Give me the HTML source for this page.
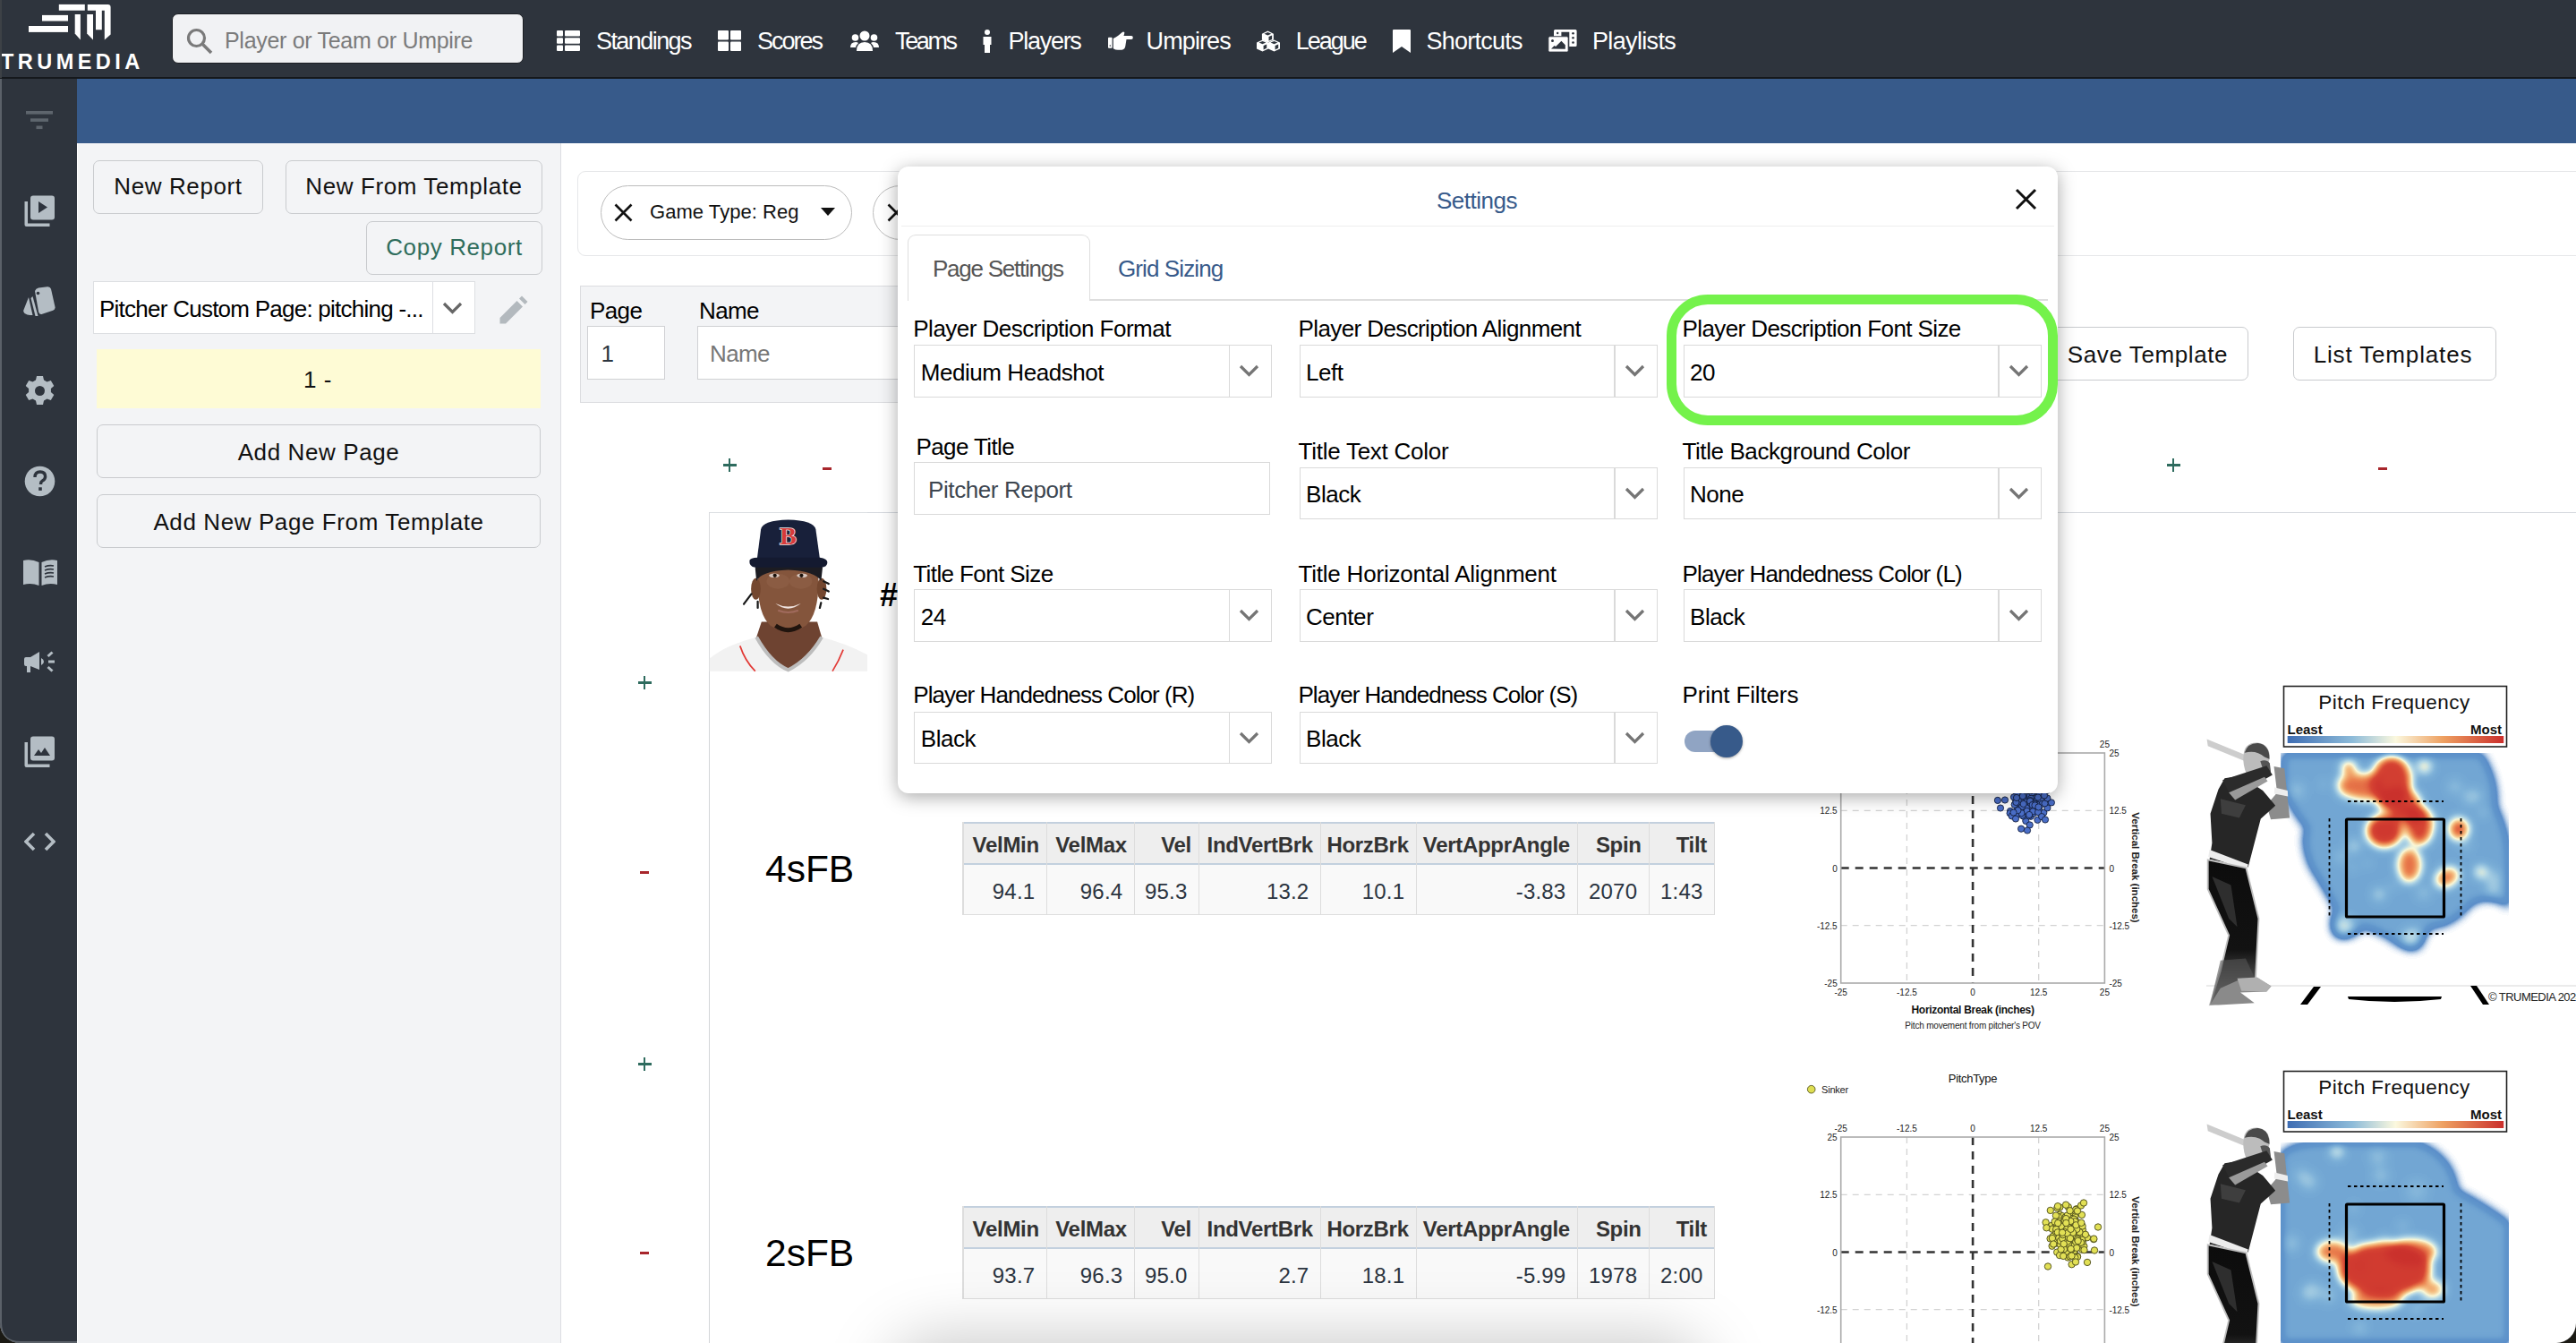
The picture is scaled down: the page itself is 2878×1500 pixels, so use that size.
<!DOCTYPE html>
<html><head><meta charset="utf-8">
<style>
*{box-sizing:border-box;margin:0;padding:0}
html,body{width:2878px;height:1500px;overflow:hidden;background:#1b1a14}
body{font-family:"Liberation Sans",sans-serif;position:relative;color:#000}
.a{position:absolute}
.t{position:absolute;white-space:nowrap;line-height:1}
#win{position:absolute;left:0;top:0;width:2878px;height:1500px;overflow:hidden;border-radius:0 0 22px 22px;background:#fff}
#hdr{left:0;top:0;width:2878px;height:88px;background:#2e343d;border-bottom:2px solid #15181c}
#side{left:0;top:88px;width:86px;height:1412px;background:#2e343d}
#blue{left:86px;top:88px;width:2792px;height:72px;background:#375a8a}
#lpanel{left:86px;top:160px;width:541px;height:1340px;background:#f3f4f6;border-left:1px solid #fff;border-right:1px solid #dcdee2}
.nav{color:#fff;font-size:27px;top:33px}
.btn{position:absolute;background:#f3f4f6;border:1.5px solid #c9cbce;border-radius:7px;font-size:26px;color:#111;text-align:center;white-space:nowrap;letter-spacing:0.6px}
.ico{position:absolute}
.lbl{font-size:26px;color:#000;letter-spacing:-0.6px}
.val{font-size:26px;color:#000;letter-spacing:-0.45px}
.pl{width:15px;height:15px}
.pl:before{content:"";position:absolute;left:0;top:6.4px;width:14.5px;height:2.3px;background:#2e6b5e}
.pl:after{content:"";position:absolute;left:6.1px;top:0;width:2.3px;height:14.5px;background:#2e6b5e}
.mi{width:9.5px;height:2.6px;background:#a8262c}
.th{font-size:24px;font-weight:bold;color:#333;letter-spacing:-0.3px}
.td{font-size:24px;color:#2b3440;letter-spacing:0.2px}
.big{font-size:42.5px;color:#000;letter-spacing:0px;margin-top:-1.5px}
</style></head>
<body>
<div id="win">
<div id="hdr" class="a"></div>
<!-- logo -->
<svg class="a" style="left:0;top:0" width="170" height="86" viewBox="0 0 170 86">
  <g fill="#fff">
    <rect x="65.8" y="4.9" width="29" height="6.8"/>
    <rect x="47" y="16.9" width="29" height="6.6"/>
    <rect x="32" y="29" width="44" height="6.9"/>
    <path d="M83.7 16 H89.9 V44.4 L83.7 37.6 Z"/>
    <path d="M97.2 16 H104 V44.4 L97.2 37.6 Z"/>
    <path d="M97.8 4.9 H120.6 Q123.6 4.9 123.6 7.9 V38.4 L116.8 44.6 V11.7 H113.8 V33.3 H107 V11.7 H97.8 Z"/>
  </g>
  <text x="1" y="77" fill="#fff" font-family="Liberation Sans" font-weight="bold" font-size="23.5" letter-spacing="4.45">TRUMEDIA</text>
</svg>
<!-- search -->
<div class="a" style="left:192px;top:15px;width:393px;height:56px;background:#f1f2f4;border-radius:7px;border:1px solid #1c1f24"></div>
<svg class="a" style="left:208px;top:31px" width="30" height="30" viewBox="0 0 30 30"><circle cx="11.5" cy="11.5" r="9" fill="none" stroke="#7a7a7a" stroke-width="3.2"/><path d="M18 18 L28 28" stroke="#7a7a7a" stroke-width="3.6"/></svg>
<div class="t" style="left:251px;top:33px;font-size:25px;color:#7b7b7b;letter-spacing:-0.3px">Player or Team or Umpire</div>

<!-- nav -->
<svg class="a" style="left:622px;top:34px" width="26" height="23" viewBox="0 0 26 23"><g fill="#fff"><rect x="0" y="0" width="7" height="6.5" rx="1"/><rect x="9" y="0" width="17" height="6.5" rx="1"/><rect x="0" y="8.3" width="7" height="6.5" rx="1"/><rect x="9" y="8.3" width="17" height="6.5" rx="1"/><rect x="0" y="16.5" width="7" height="6.5" rx="1"/><rect x="9" y="16.5" width="17" height="6.5" rx="1"/></g></svg>
<div class="t nav" style="left:666px;letter-spacing:-1.57px">Standings</div>
<svg class="a" style="left:802px;top:34px" width="26" height="23" viewBox="0 0 26 23"><g fill="#fff"><rect x="0" y="0" width="12" height="10.5" rx="1"/><rect x="14" y="0" width="12" height="10.5" rx="1"/><rect x="0" y="12.5" width="12" height="10.5" rx="1"/><rect x="14" y="12.5" width="12" height="10.5" rx="1"/></g></svg>
<div class="t nav" style="left:846px;letter-spacing:-2.0px">Scores</div>
<svg class="a" style="left:950px;top:34px" width="32" height="24" viewBox="0 0 32 24"><g fill="#fff"><circle cx="16" cy="6" r="5.5"/><circle cx="5.5" cy="8" r="3.8"/><circle cx="26.5" cy="8" r="3.8"/><path d="M7 23 q0 -10 9 -10 q9 0 9 10z"/><path d="M0 19 q0 -6 6 -6 q2 0 3 1 q-3 3 -3 5z"/><path d="M32 19 q0 -6 -6 -6 q-2 0 -3 1 q3 3 3 5z"/></g></svg>
<div class="t nav" style="left:1000px;letter-spacing:-2.35px">Teams</div>
<svg class="a" style="left:1098px;top:33px" width="10" height="26" viewBox="0 0 10 26"><g fill="#fff"><circle cx="5" cy="3" r="3"/><path d="M0.5 8 h9 v9 h-1.5 v9 h-6 v-9 h-1.5z"/></g></svg>
<div class="t nav" style="left:1126.5px;letter-spacing:-1.28px">Players</div>
<svg class="a" style="left:1230px;top:25px" width="40" height="40" viewBox="0 0 40 40"><g fill="#fff"><rect x="8" y="16.7" width="4.6" height="12" rx="0.8"/><path d="M13.8 18 q3 -1.5 5.5 -3.3 l4.5 -3.8 q1.8 -0.8 2.6 0.6 l-0.9 3.6 h8.5 q1.8 0 1.8 2 q0 2 -1.8 2 h-5.5 l-1.2 7.5 q-0.6 3.8 -4 4.2 h-4.5 q-2.5 0 -5 -1.5 z"/></g><circle cx="10.3" cy="26" r="0.8" fill="#2e343d"/></svg>
<div class="t nav" style="left:1280.6px;letter-spacing:-0.9px">Umpires</div>
<svg class="a" style="left:1398px;top:25px" width="40" height="40" viewBox="0 0 40 40"><g transform="translate(11.9 9.5)"><path d="M0 3.2 L6.5 0 L13 3.2 V10 L6.5 13 L0 10z" fill="#fff"/><path d="M2.6 3.2 L6.5 1.6 L10.4 3.2 L6.5 4.9z" fill="#2e343d"/><path d="M7.6 6.6 L11.2 5.1 V9.4 L7.6 11z" fill="#2e343d"/></g><g transform="translate(6 19.4)"><path d="M0 3.2 L6.5 0 L13 3.2 V10 L6.5 13 L0 10z" fill="#fff"/><path d="M2.6 3.2 L6.5 1.6 L10.4 3.2 L6.5 4.9z" fill="#2e343d"/><path d="M7.6 6.6 L11.2 5.1 V9.4 L7.6 11z" fill="#2e343d"/></g><g transform="translate(19 19.4)"><path d="M0 3.2 L6.5 0 L13 3.2 V10 L6.5 13 L0 10z" fill="#fff"/><path d="M2.6 3.2 L6.5 1.6 L10.4 3.2 L6.5 4.9z" fill="#2e343d"/><path d="M7.6 6.6 L11.2 5.1 V9.4 L7.6 11z" fill="#2e343d"/></g></svg>
<div class="t nav" style="left:1447.7px;letter-spacing:-2px">League</div>
<svg class="a" style="left:1556px;top:33px" width="20" height="26" viewBox="0 0 20 26"><path fill="#fff" d="M1 0 h18 q1 0 1 1 v25 l-10 -7 l-10 7 v-25 q0 -1 1 -1z"/></svg>
<div class="t nav" style="left:1593.6px;letter-spacing:-0.76px">Shortcuts</div>
<svg class="a" style="left:1725px;top:25px" width="40" height="40" viewBox="0 0 40 40"><path fill="#fff" fill-rule="evenodd" d="M12.5 7.9 h22.6 q1.5 0 1.5 1.5 v16.2 q0 1.5 -1.5 1.5 h-6.8 v-16.3 h-8.9 v4.6 h-8.4 v-6 q0 -1.5 1.5 -1.5z"/><g fill="#2e343d"><circle cx="32.5" cy="12.2" r="1.3"/><circle cx="32.5" cy="17.3" r="1.3"/><circle cx="32.5" cy="22.5" r="1.3"/><circle cx="15.2" cy="12" r="1.2"/></g><rect x="4.9" y="15.8" width="22.2" height="17.2" rx="1.6" fill="#fff" stroke="#2e343d" stroke-width="0.8"/><g fill="#2e343d"><circle cx="9.5" cy="20.5" r="1.5"/><path d="M8 29.6 L11.6 25.9 L13.1 27.1 L19.4 20.8 L23.8 25.3 V29.8z"/></g></svg>
<div class="t nav" style="left:1779px;letter-spacing:-0.66px">Playlists</div>

<div id="side" class="a"></div>
<svg class="a" style="left:0;top:0;z-index:5" width="90" height="1500" viewBox="0 0 90 1500"><path d="M1 88 V1477 Q1 1499 23 1499 H86" fill="none" stroke="#5b6169" stroke-width="2"/><path d="M1 0 V87" stroke="#3d4146" stroke-width="2"/></svg>
<div id="blue" class="a"></div>
<div id="lpanel" class="a"></div>

<!-- sidebar icons -->
<svg class="a" style="left:29px;top:124px" width="31" height="21" viewBox="0 0 31 21"><g fill="#5e656d"><rect x="0" y="0" width="30" height="3.6"/><rect x="5" y="8.3" width="20" height="3.6"/><rect x="11.5" y="16.5" width="7" height="3.6"/></g></svg>
<svg class="a" style="left:27px;top:218px" width="35" height="35" viewBox="0 0 35 35"><g fill="#b4bdc4"><path d="M0.5 7 h3.5 v24.5 h24.5 v3.5 h-26 q-2 0 -2 -2z"/><rect x="7" y="0.5" width="27" height="27" rx="3"/></g><path d="M16 7 v13 l10 -6.5z" fill="#2e343d"/></svg>
<svg class="a" style="left:26px;top:320px" width="36" height="34" viewBox="0 0 36 34"><g fill="#b4bdc4"><path d="M13 5 q1 -3 4 -3.5 l10 -1.3 q3 -0.3 4 2.5 l4.5 20 q0.5 3 -2.3 4 l-12 4 q-3 0.8 -4 -2z"/><path d="M6 12 l4.5 20 l-3 0 q-3 0 -6 -2 q-2 -2 -1 -4z"/><path d="M10.5 11 l6 22 l-3 0 l-5 -20z"/></g><circle cx="16.5" cy="7.5" r="1.8" fill="#2e343d"/></svg>
<svg class="a" style="left:27px;top:419px" width="35" height="35" viewBox="-17.5 -17.5 35 35"><g fill="#b4bdc4"><path d="M-3.5 -16.5 h7 l1 4.5 l3.5 2 l4.3 -1.5 l3.5 6 l-3.4 3 v4 l3.4 3 l-3.5 6 l-4.3 -1.5 l-3.5 2 l-1 4.5 h-7 l-1 -4.5 l-3.5 -2 l-4.3 1.5 l-3.5 -6 l3.4 -3 v-4 l-3.4 -3 l3.5 -6 l4.3 1.5 l3.5 -2z"/></g><circle cx="0" cy="0" r="5.5" fill="#2e343d"/></svg>
<svg class="a" style="left:27px;top:520px" width="35" height="35" viewBox="0 0 35 35"><circle cx="17.5" cy="17.5" r="16.8" fill="#b4bdc4"/><path d="M12 13 q0 -6 5.8 -6 q5.8 0 5.8 5.3 q0 3.3 -3.5 5 q-1.5 0.8 -1.5 2.8 v1" fill="none" stroke="#2e343d" stroke-width="3.4"/><rect x="16.2" y="24.3" width="3.6" height="3.6" fill="#2e343d"/></svg>
<svg class="a" style="left:26px;top:625px" width="38" height="30" viewBox="0 0 38 30"><g fill="#b4bdc4"><path d="M0 1 q9 -2 17.5 2 v26 q-8.5 -3.5 -17.5 -1z"/><path d="M20.5 3 q8.5 -4 17.5 -2 v27 q-9 -2.5 -17.5 1z"/></g><g stroke="#2e343d" stroke-width="1.6" fill="none"><path d="M24 8 q5 -2 10 -1"/><path d="M24 12 q5 -2 10 -1"/><path d="M24 16 q5 -2 10 -1"/><path d="M24 20 q5 -2 10 -1"/></g></svg>
<svg class="a" style="left:27px;top:726px" width="35" height="26" viewBox="0 0 35 26"><g fill="#b4bdc4"><path d="M2 8 h5 l10 -6 v20 l-10 -4 v7 h-4 v-7 h-1 q-2 0 -2 -2 v-6 q0 -2 2 -2z"/><path d="M19 9 q3 1.5 3 4 q0 2.5 -3 4z"/><rect x="27" y="11.5" width="7" height="3" /><path d="M25.5 6 l5 -4.5 l2 2 l-5 4.5z"/><path d="M25.5 20 l5 4.5 l2 -2 l-5 -4.5z"/></g></svg>
<svg class="a" style="left:27px;top:822px" width="35" height="35" viewBox="0 0 35 35"><g fill="#b4bdc4"><path d="M0.5 7 h3.5 v24.5 h24.5 v3.5 h-26 q-2 0 -2 -2z"/><rect x="7" y="0.5" width="27" height="27" rx="3"/></g><path d="M11 22 l5 -7 l3 4 l4 -6 l6 9z" fill="#2e343d"/></svg>
<svg class="a" style="left:27px;top:929px" width="35" height="22" viewBox="0 0 35 22"><g fill="none" stroke="#b4bdc4" stroke-width="3.6"><path d="M11 2 l-9 9 l9 9"/><path d="M24 2 l9 9 l-9 9"/></g></svg>
<div class="a" style="left:86px;top:160px;width:1px;height:1340px;background:#fff"></div>


<!-- main content -->
<div class="a" style="left:645px;top:191px;width:2300px;height:95px;border:1.5px solid #e6e7e9;border-radius:9px;background:#fff"></div>
<div class="a" style="left:671px;top:206.5px;width:281px;height:61px;border:1.5px solid #bcbcbc;border-radius:31px;background:#fff"></div>
<svg class="a" style="left:686px;top:227px" width="21" height="21" viewBox="0 0 21 21"><path d="M1.5 1.5 L19.5 19.5 M19.5 1.5 L1.5 19.5" stroke="#111" stroke-width="2.6"/></svg>
<div class="t" style="left:726px;top:226px;font-size:22px;color:#111;letter-spacing:0.05px">Game Type: Reg</div>
<svg class="a" style="left:917px;top:232px" width="16" height="10" viewBox="0 0 16 10"><path d="M0 0 h16 l-8 9z" fill="#111"/></svg>
<div class="a" style="left:975px;top:206.5px;width:200px;height:61px;border:1.5px solid #bcbcbc;border-radius:31px;background:#fff"></div>
<svg class="a" style="left:991px;top:227px" width="21" height="21" viewBox="0 0 21 21"><path d="M1.5 1.5 L19.5 19.5 M19.5 1.5 L1.5 19.5" stroke="#111" stroke-width="2.6"/></svg>

<div class="a" style="left:648px;top:319px;width:1620px;height:131px;background:#f3f4f6;border:1.5px solid #dcdde0"></div>
<div class="t" style="left:659px;top:333.5px;font-size:26px;color:#000;letter-spacing:-0.6px">Page</div>
<div class="a" style="left:656px;top:364px;width:87px;height:60px;background:#fff;border:1.5px solid #d0d1d4"></div>
<div class="t" style="left:671.5px;top:381.5px;font-size:26px;color:#2d3640">1</div>
<div class="t" style="left:781px;top:334px;font-size:26px;color:#000;letter-spacing:-0.6px">Name</div>
<div class="a" style="left:779px;top:364px;width:1200px;height:60px;background:#fff;border:1.5px solid #d0d1d4"></div>
<div class="t" style="left:793px;top:382px;font-size:26px;color:#777;letter-spacing:-0.6px">Name</div>

<div class="btn" style="left:2287px;top:365px;width:225px;height:60px;line-height:61px;background:#fff">Save Template</div>
<div class="btn" style="left:2562px;top:365px;width:227px;height:60px;line-height:61px;background:#fff;letter-spacing:0.85px;text-indent:-4px">List Templates</div>

<div class="a pl" style="left:808px;top:512px"></div>
<div class="a mi" style="left:919px;top:522px"></div>
<div class="a pl" style="left:2421px;top:512px"></div>
<div class="a mi" style="left:2657px;top:522px"></div>
<div class="a pl" style="left:713px;top:755px"></div>
<div class="a mi" style="left:715px;top:973px"></div>
<div class="a pl" style="left:713px;top:1181px"></div>
<div class="a mi" style="left:715px;top:1398px"></div>

<div class="a" style="left:792px;top:572px;width:2200px;height:1000px;border-top:1.5px solid #d5d9de;border-left:1.5px solid #d3d5d8"></div>
<div class="t" style="left:982.5px;top:647px;font-size:36px;font-style:italic;font-weight:bold;color:#000">#</div>
<div class="t big" style="left:855px;top:951px">4sFB</div>
<div class="t big" style="left:855px;top:1380px">2sFB</div>
<div class="a" style="left:1076px;top:918px;width:839.5px;height:48px;background:#eeeeee;border-top:2px solid #c3d0de;border-bottom:2px solid #c3d0de"></div>
<div class="a" style="left:1076px;top:966px;width:839.5px;height:56px;background:#f9f9f9;border-bottom:1.5px solid #dedede"></div>
<div class="a" style="left:1075.2px;top:918px;width:1.5px;height:104px;background:#dddddd"></div>
<div class="a" style="left:1168.5px;top:918px;width:1.5px;height:104px;background:#dddddd"></div>
<div class="a" style="left:1266.5px;top:918px;width:1.5px;height:104px;background:#dddddd"></div>
<div class="a" style="left:1338.8px;top:918px;width:1.5px;height:104px;background:#dddddd"></div>
<div class="a" style="left:1474.7px;top:918px;width:1.5px;height:104px;background:#dddddd"></div>
<div class="a" style="left:1581.5px;top:918px;width:1.5px;height:104px;background:#dddddd"></div>
<div class="a" style="left:1761.7px;top:918px;width:1.5px;height:104px;background:#dddddd"></div>
<div class="a" style="left:1841.5px;top:918px;width:1.5px;height:104px;background:#dddddd"></div>
<div class="a" style="left:1914.8px;top:918px;width:1.5px;height:104px;background:#dddddd"></div>
<div class="t th" style="right:1717.2px;top:932px">VelMin</div>
<div class="t td" style="right:1721.7px;top:984px">94.1</div>
<div class="t th" style="right:1619.2px;top:932px">VelMax</div>
<div class="t td" style="right:1623.7px;top:984px">96.4</div>
<div class="t th" style="right:1547.0px;top:932px">Vel</div>
<div class="t td" style="right:1551.5px;top:984px">95.3</div>
<div class="t th" style="right:1411.1px;top:932px">IndVertBrk</div>
<div class="t td" style="right:1415.6px;top:984px">13.2</div>
<div class="t th" style="right:1304.3px;top:932px">HorzBrk</div>
<div class="t td" style="right:1308.8px;top:984px">10.1</div>
<div class="t th" style="right:1124.1px;top:932px">VertApprAngle</div>
<div class="t td" style="right:1128.6px;top:984px">-3.83</div>
<div class="t th" style="right:1044.3px;top:932px">Spin</div>
<div class="t td" style="right:1048.8px;top:984px">2070</div>
<div class="t th" style="right:971.0px;top:932px">Tilt</div>
<div class="t td" style="right:975.5px;top:984px">1:43</div>
<div class="a" style="left:1076px;top:1347px;width:839.5px;height:48px;background:#eeeeee;border-top:2px solid #c3d0de;border-bottom:2px solid #c3d0de"></div>
<div class="a" style="left:1076px;top:1395px;width:839.5px;height:56px;background:#f9f9f9;border-bottom:1.5px solid #dedede"></div>
<div class="a" style="left:1075.2px;top:1347px;width:1.5px;height:104px;background:#dddddd"></div>
<div class="a" style="left:1168.5px;top:1347px;width:1.5px;height:104px;background:#dddddd"></div>
<div class="a" style="left:1266.5px;top:1347px;width:1.5px;height:104px;background:#dddddd"></div>
<div class="a" style="left:1338.8px;top:1347px;width:1.5px;height:104px;background:#dddddd"></div>
<div class="a" style="left:1474.7px;top:1347px;width:1.5px;height:104px;background:#dddddd"></div>
<div class="a" style="left:1581.5px;top:1347px;width:1.5px;height:104px;background:#dddddd"></div>
<div class="a" style="left:1761.7px;top:1347px;width:1.5px;height:104px;background:#dddddd"></div>
<div class="a" style="left:1841.5px;top:1347px;width:1.5px;height:104px;background:#dddddd"></div>
<div class="a" style="left:1914.8px;top:1347px;width:1.5px;height:104px;background:#dddddd"></div>
<div class="t th" style="right:1717.2px;top:1361px">VelMin</div>
<div class="t td" style="right:1721.7px;top:1413px">93.7</div>
<div class="t th" style="right:1619.2px;top:1361px">VelMax</div>
<div class="t td" style="right:1623.7px;top:1413px">96.3</div>
<div class="t th" style="right:1547.0px;top:1361px">Vel</div>
<div class="t td" style="right:1551.5px;top:1413px">95.0</div>
<div class="t th" style="right:1411.1px;top:1361px">IndVertBrk</div>
<div class="t td" style="right:1415.6px;top:1413px">2.7</div>
<div class="t th" style="right:1304.3px;top:1361px">HorzBrk</div>
<div class="t td" style="right:1308.8px;top:1413px">18.1</div>
<div class="t th" style="right:1124.1px;top:1361px">VertApprAngle</div>
<div class="t td" style="right:1128.6px;top:1413px">-5.99</div>
<div class="t th" style="right:1044.3px;top:1361px">Spin</div>
<div class="t td" style="right:1048.8px;top:1413px">1978</div>
<div class="t th" style="right:971.0px;top:1361px">Tilt</div>
<div class="t td" style="right:975.5px;top:1413px">2:00</div>
<svg class="a" style="left:1990px;top:750.5px" width="420" height="400" viewBox="1990 750.5 420 400">
<line x1="2130.4" y1="840.5" x2="2130.4" y2="1097.5" stroke="#d3d3d3" stroke-width="1.3" stroke-dasharray="7,6"/>
<line x1="2277.7" y1="840.5" x2="2277.7" y2="1097.5" stroke="#d3d3d3" stroke-width="1.3" stroke-dasharray="7,6"/>
<line x1="2056.7" y1="1033.2" x2="2351.4" y2="1033.2" stroke="#d3d3d3" stroke-width="1.3" stroke-dasharray="7,6"/>
<line x1="2056.7" y1="904.8" x2="2351.4" y2="904.8" stroke="#d3d3d3" stroke-width="1.3" stroke-dasharray="7,6"/>
<line x1="2204.1" y1="840.5" x2="2204.1" y2="1097.5" stroke="#333" stroke-width="2.6" stroke-dasharray="9,7"/>
<line x1="2056.7" y1="969.0" x2="2351.4" y2="969.0" stroke="#333" stroke-width="2.6" stroke-dasharray="9,7"/>
<rect x="2056.7" y="840.5" width="294.7" height="257" fill="none" stroke="#aaa" stroke-width="1.6"/>
<circle cx="2268.9" cy="911.3" r="3.6" fill="#4a6ec8" stroke="#14203f" stroke-width="0.9"/>
<circle cx="2258.7" cy="907.9" r="3.6" fill="#4a6ec8" stroke="#14203f" stroke-width="0.9"/>
<circle cx="2265.4" cy="891.6" r="3.6" fill="#4a6ec8" stroke="#14203f" stroke-width="0.9"/>
<circle cx="2287.0" cy="897.0" r="3.6" fill="#4a6ec8" stroke="#14203f" stroke-width="0.9"/>
<circle cx="2267.6" cy="904.5" r="3.6" fill="#4a6ec8" stroke="#14203f" stroke-width="0.9"/>
<circle cx="2279.3" cy="894.6" r="3.6" fill="#4a6ec8" stroke="#14203f" stroke-width="0.9"/>
<circle cx="2273.9" cy="882.3" r="3.6" fill="#4a6ec8" stroke="#14203f" stroke-width="0.9"/>
<circle cx="2264.3" cy="889.3" r="3.6" fill="#4a6ec8" stroke="#14203f" stroke-width="0.9"/>
<circle cx="2254.7" cy="875.4" r="3.6" fill="#4a6ec8" stroke="#14203f" stroke-width="0.9"/>
<circle cx="2251.7" cy="891.9" r="3.6" fill="#4a6ec8" stroke="#14203f" stroke-width="0.9"/>
<circle cx="2266.3" cy="890.8" r="3.6" fill="#4a6ec8" stroke="#14203f" stroke-width="0.9"/>
<circle cx="2268.7" cy="877.6" r="3.6" fill="#4a6ec8" stroke="#14203f" stroke-width="0.9"/>
<circle cx="2267.2" cy="898.1" r="3.6" fill="#4a6ec8" stroke="#14203f" stroke-width="0.9"/>
<circle cx="2275.5" cy="884.0" r="3.6" fill="#4a6ec8" stroke="#14203f" stroke-width="0.9"/>
<circle cx="2264.0" cy="868.8" r="3.6" fill="#4a6ec8" stroke="#14203f" stroke-width="0.9"/>
<circle cx="2263.0" cy="866.4" r="3.6" fill="#4a6ec8" stroke="#14203f" stroke-width="0.9"/>
<circle cx="2253.8" cy="909.3" r="3.6" fill="#4a6ec8" stroke="#14203f" stroke-width="0.9"/>
<circle cx="2246.0" cy="905.4" r="3.6" fill="#4a6ec8" stroke="#14203f" stroke-width="0.9"/>
<circle cx="2271.3" cy="890.9" r="3.6" fill="#4a6ec8" stroke="#14203f" stroke-width="0.9"/>
<circle cx="2272.6" cy="901.9" r="3.6" fill="#4a6ec8" stroke="#14203f" stroke-width="0.9"/>
<circle cx="2278.5" cy="892.0" r="3.6" fill="#4a6ec8" stroke="#14203f" stroke-width="0.9"/>
<circle cx="2262.1" cy="887.1" r="3.6" fill="#4a6ec8" stroke="#14203f" stroke-width="0.9"/>
<circle cx="2258.1" cy="894.4" r="3.6" fill="#4a6ec8" stroke="#14203f" stroke-width="0.9"/>
<circle cx="2260.1" cy="908.9" r="3.6" fill="#4a6ec8" stroke="#14203f" stroke-width="0.9"/>
<circle cx="2249.3" cy="880.8" r="3.6" fill="#4a6ec8" stroke="#14203f" stroke-width="0.9"/>
<circle cx="2258.5" cy="867.8" r="3.6" fill="#4a6ec8" stroke="#14203f" stroke-width="0.9"/>
<circle cx="2287.0" cy="863.7" r="3.6" fill="#4a6ec8" stroke="#14203f" stroke-width="0.9"/>
<circle cx="2265.2" cy="888.2" r="3.6" fill="#4a6ec8" stroke="#14203f" stroke-width="0.9"/>
<circle cx="2284.6" cy="869.2" r="3.6" fill="#4a6ec8" stroke="#14203f" stroke-width="0.9"/>
<circle cx="2278.7" cy="885.5" r="3.6" fill="#4a6ec8" stroke="#14203f" stroke-width="0.9"/>
<circle cx="2266.4" cy="886.3" r="3.6" fill="#4a6ec8" stroke="#14203f" stroke-width="0.9"/>
<circle cx="2274.4" cy="880.2" r="3.6" fill="#4a6ec8" stroke="#14203f" stroke-width="0.9"/>
<circle cx="2267.2" cy="899.6" r="3.6" fill="#4a6ec8" stroke="#14203f" stroke-width="0.9"/>
<circle cx="2286.4" cy="863.7" r="3.6" fill="#4a6ec8" stroke="#14203f" stroke-width="0.9"/>
<circle cx="2283.3" cy="907.3" r="3.6" fill="#4a6ec8" stroke="#14203f" stroke-width="0.9"/>
<circle cx="2263.2" cy="899.0" r="3.6" fill="#4a6ec8" stroke="#14203f" stroke-width="0.9"/>
<circle cx="2263.3" cy="916.4" r="3.6" fill="#4a6ec8" stroke="#14203f" stroke-width="0.9"/>
<circle cx="2270.1" cy="892.2" r="3.6" fill="#4a6ec8" stroke="#14203f" stroke-width="0.9"/>
<circle cx="2265.7" cy="892.4" r="3.6" fill="#4a6ec8" stroke="#14203f" stroke-width="0.9"/>
<circle cx="2266.2" cy="883.6" r="3.6" fill="#4a6ec8" stroke="#14203f" stroke-width="0.9"/>
<circle cx="2288.6" cy="870.2" r="3.6" fill="#4a6ec8" stroke="#14203f" stroke-width="0.9"/>
<circle cx="2231.9" cy="893.4" r="3.6" fill="#4a6ec8" stroke="#14203f" stroke-width="0.9"/>
<circle cx="2266.5" cy="899.8" r="3.6" fill="#4a6ec8" stroke="#14203f" stroke-width="0.9"/>
<circle cx="2266.0" cy="893.1" r="3.6" fill="#4a6ec8" stroke="#14203f" stroke-width="0.9"/>
<circle cx="2271.3" cy="907.6" r="3.6" fill="#4a6ec8" stroke="#14203f" stroke-width="0.9"/>
<circle cx="2263.5" cy="890.2" r="3.6" fill="#4a6ec8" stroke="#14203f" stroke-width="0.9"/>
<circle cx="2287.4" cy="901.9" r="3.6" fill="#4a6ec8" stroke="#14203f" stroke-width="0.9"/>
<circle cx="2258.1" cy="925.2" r="3.6" fill="#4a6ec8" stroke="#14203f" stroke-width="0.9"/>
<circle cx="2275.8" cy="887.3" r="3.6" fill="#4a6ec8" stroke="#14203f" stroke-width="0.9"/>
<circle cx="2256.3" cy="898.9" r="3.6" fill="#4a6ec8" stroke="#14203f" stroke-width="0.9"/>
<circle cx="2259.7" cy="881.3" r="3.6" fill="#4a6ec8" stroke="#14203f" stroke-width="0.9"/>
<circle cx="2255.0" cy="888.4" r="3.6" fill="#4a6ec8" stroke="#14203f" stroke-width="0.9"/>
<circle cx="2279.1" cy="889.4" r="3.6" fill="#4a6ec8" stroke="#14203f" stroke-width="0.9"/>
<circle cx="2253.5" cy="903.7" r="3.6" fill="#4a6ec8" stroke="#14203f" stroke-width="0.9"/>
<circle cx="2268.7" cy="906.0" r="3.6" fill="#4a6ec8" stroke="#14203f" stroke-width="0.9"/>
<circle cx="2280.0" cy="892.8" r="3.6" fill="#4a6ec8" stroke="#14203f" stroke-width="0.9"/>
<circle cx="2266.6" cy="894.4" r="3.6" fill="#4a6ec8" stroke="#14203f" stroke-width="0.9"/>
<circle cx="2256.7" cy="903.7" r="3.6" fill="#4a6ec8" stroke="#14203f" stroke-width="0.9"/>
<circle cx="2281.7" cy="897.3" r="3.6" fill="#4a6ec8" stroke="#14203f" stroke-width="0.9"/>
<circle cx="2265.6" cy="891.6" r="3.6" fill="#4a6ec8" stroke="#14203f" stroke-width="0.9"/>
<circle cx="2260.2" cy="884.5" r="3.6" fill="#4a6ec8" stroke="#14203f" stroke-width="0.9"/>
<circle cx="2264.0" cy="884.1" r="3.6" fill="#4a6ec8" stroke="#14203f" stroke-width="0.9"/>
<circle cx="2263.6" cy="874.5" r="3.6" fill="#4a6ec8" stroke="#14203f" stroke-width="0.9"/>
<circle cx="2271.5" cy="895.6" r="3.6" fill="#4a6ec8" stroke="#14203f" stroke-width="0.9"/>
<circle cx="2256.5" cy="865.1" r="3.6" fill="#4a6ec8" stroke="#14203f" stroke-width="0.9"/>
<circle cx="2267.9" cy="909.4" r="3.6" fill="#4a6ec8" stroke="#14203f" stroke-width="0.9"/>
<circle cx="2260.7" cy="888.7" r="3.6" fill="#4a6ec8" stroke="#14203f" stroke-width="0.9"/>
<circle cx="2262.3" cy="903.5" r="3.6" fill="#4a6ec8" stroke="#14203f" stroke-width="0.9"/>
<circle cx="2258.8" cy="907.8" r="3.6" fill="#4a6ec8" stroke="#14203f" stroke-width="0.9"/>
<circle cx="2265.0" cy="907.0" r="3.6" fill="#4a6ec8" stroke="#14203f" stroke-width="0.9"/>
<circle cx="2268.3" cy="892.0" r="3.6" fill="#4a6ec8" stroke="#14203f" stroke-width="0.9"/>
<circle cx="2253.2" cy="886.1" r="3.6" fill="#4a6ec8" stroke="#14203f" stroke-width="0.9"/>
<circle cx="2265.4" cy="903.6" r="3.6" fill="#4a6ec8" stroke="#14203f" stroke-width="0.9"/>
<circle cx="2270.4" cy="885.9" r="3.6" fill="#4a6ec8" stroke="#14203f" stroke-width="0.9"/>
<circle cx="2272.1" cy="907.8" r="3.6" fill="#4a6ec8" stroke="#14203f" stroke-width="0.9"/>
<circle cx="2266.5" cy="889.3" r="3.6" fill="#4a6ec8" stroke="#14203f" stroke-width="0.9"/>
<circle cx="2264.1" cy="905.5" r="3.6" fill="#4a6ec8" stroke="#14203f" stroke-width="0.9"/>
<circle cx="2273.4" cy="882.9" r="3.6" fill="#4a6ec8" stroke="#14203f" stroke-width="0.9"/>
<circle cx="2271.7" cy="888.8" r="3.6" fill="#4a6ec8" stroke="#14203f" stroke-width="0.9"/>
<circle cx="2260.5" cy="911.1" r="3.6" fill="#4a6ec8" stroke="#14203f" stroke-width="0.9"/>
<circle cx="2276.2" cy="885.6" r="3.6" fill="#4a6ec8" stroke="#14203f" stroke-width="0.9"/>
<circle cx="2268.8" cy="901.5" r="3.6" fill="#4a6ec8" stroke="#14203f" stroke-width="0.9"/>
<circle cx="2261.6" cy="893.4" r="3.6" fill="#4a6ec8" stroke="#14203f" stroke-width="0.9"/>
<circle cx="2274.7" cy="871.7" r="3.6" fill="#4a6ec8" stroke="#14203f" stroke-width="0.9"/>
<circle cx="2271.3" cy="904.6" r="3.6" fill="#4a6ec8" stroke="#14203f" stroke-width="0.9"/>
<circle cx="2273.0" cy="877.6" r="3.6" fill="#4a6ec8" stroke="#14203f" stroke-width="0.9"/>
<circle cx="2271.2" cy="883.8" r="3.6" fill="#4a6ec8" stroke="#14203f" stroke-width="0.9"/>
<circle cx="2273.7" cy="902.9" r="3.6" fill="#4a6ec8" stroke="#14203f" stroke-width="0.9"/>
<circle cx="2270.2" cy="885.1" r="3.6" fill="#4a6ec8" stroke="#14203f" stroke-width="0.9"/>
<circle cx="2262.1" cy="906.1" r="3.6" fill="#4a6ec8" stroke="#14203f" stroke-width="0.9"/>
<circle cx="2259.0" cy="901.4" r="3.6" fill="#4a6ec8" stroke="#14203f" stroke-width="0.9"/>
<circle cx="2273.1" cy="891.4" r="3.6" fill="#4a6ec8" stroke="#14203f" stroke-width="0.9"/>
<circle cx="2291.9" cy="895.9" r="3.6" fill="#4a6ec8" stroke="#14203f" stroke-width="0.9"/>
<circle cx="2289.5" cy="868.8" r="3.6" fill="#4a6ec8" stroke="#14203f" stroke-width="0.9"/>
<circle cx="2245.6" cy="907.8" r="3.6" fill="#4a6ec8" stroke="#14203f" stroke-width="0.9"/>
<circle cx="2274.4" cy="890.9" r="3.6" fill="#4a6ec8" stroke="#14203f" stroke-width="0.9"/>
<circle cx="2267.5" cy="870.3" r="3.6" fill="#4a6ec8" stroke="#14203f" stroke-width="0.9"/>
<circle cx="2261.7" cy="881.6" r="3.6" fill="#4a6ec8" stroke="#14203f" stroke-width="0.9"/>
<circle cx="2265.8" cy="906.5" r="3.6" fill="#4a6ec8" stroke="#14203f" stroke-width="0.9"/>
<circle cx="2268.5" cy="899.8" r="3.6" fill="#4a6ec8" stroke="#14203f" stroke-width="0.9"/>
<circle cx="2261.0" cy="889.3" r="3.6" fill="#4a6ec8" stroke="#14203f" stroke-width="0.9"/>
<circle cx="2269.1" cy="891.3" r="3.6" fill="#4a6ec8" stroke="#14203f" stroke-width="0.9"/>
<circle cx="2280.6" cy="883.6" r="3.6" fill="#4a6ec8" stroke="#14203f" stroke-width="0.9"/>
<circle cx="2286.9" cy="882.3" r="3.6" fill="#4a6ec8" stroke="#14203f" stroke-width="0.9"/>
<circle cx="2278.6" cy="884.9" r="3.6" fill="#4a6ec8" stroke="#14203f" stroke-width="0.9"/>
<circle cx="2284.5" cy="896.8" r="3.6" fill="#4a6ec8" stroke="#14203f" stroke-width="0.9"/>
<circle cx="2272.0" cy="904.7" r="3.6" fill="#4a6ec8" stroke="#14203f" stroke-width="0.9"/>
<circle cx="2261.7" cy="881.5" r="3.6" fill="#4a6ec8" stroke="#14203f" stroke-width="0.9"/>
<circle cx="2247.7" cy="910.9" r="3.6" fill="#4a6ec8" stroke="#14203f" stroke-width="0.9"/>
<circle cx="2261.0" cy="887.3" r="3.6" fill="#4a6ec8" stroke="#14203f" stroke-width="0.9"/>
<circle cx="2267.7" cy="920.9" r="3.6" fill="#4a6ec8" stroke="#14203f" stroke-width="0.9"/>
<circle cx="2250.7" cy="898.2" r="3.6" fill="#4a6ec8" stroke="#14203f" stroke-width="0.9"/>
<circle cx="2264.0" cy="901.9" r="3.6" fill="#4a6ec8" stroke="#14203f" stroke-width="0.9"/>
<circle cx="2250.0" cy="889.8" r="3.6" fill="#4a6ec8" stroke="#14203f" stroke-width="0.9"/>
<circle cx="2276.4" cy="915.3" r="3.6" fill="#4a6ec8" stroke="#14203f" stroke-width="0.9"/>
<circle cx="2284.0" cy="883.9" r="3.6" fill="#4a6ec8" stroke="#14203f" stroke-width="0.9"/>
<circle cx="2268.5" cy="893.6" r="3.6" fill="#4a6ec8" stroke="#14203f" stroke-width="0.9"/>
<circle cx="2254.2" cy="876.3" r="3.6" fill="#4a6ec8" stroke="#14203f" stroke-width="0.9"/>
<circle cx="2275.6" cy="898.2" r="3.6" fill="#4a6ec8" stroke="#14203f" stroke-width="0.9"/>
<circle cx="2266.6" cy="910.8" r="3.6" fill="#4a6ec8" stroke="#14203f" stroke-width="0.9"/>
<circle cx="2258.0" cy="901.8" r="3.6" fill="#4a6ec8" stroke="#14203f" stroke-width="0.9"/>
<circle cx="2268.1" cy="894.2" r="3.6" fill="#4a6ec8" stroke="#14203f" stroke-width="0.9"/>
<circle cx="2272.9" cy="897.3" r="3.6" fill="#4a6ec8" stroke="#14203f" stroke-width="0.9"/>
<circle cx="2270.7" cy="898.5" r="3.6" fill="#4a6ec8" stroke="#14203f" stroke-width="0.9"/>
<circle cx="2287.4" cy="891.0" r="3.6" fill="#4a6ec8" stroke="#14203f" stroke-width="0.9"/>
<circle cx="2278.1" cy="902.9" r="3.6" fill="#4a6ec8" stroke="#14203f" stroke-width="0.9"/>
<circle cx="2264.5" cy="905.3" r="3.6" fill="#4a6ec8" stroke="#14203f" stroke-width="0.9"/>
<circle cx="2259.4" cy="910.1" r="3.6" fill="#4a6ec8" stroke="#14203f" stroke-width="0.9"/>
<circle cx="2259.9" cy="888.6" r="3.6" fill="#4a6ec8" stroke="#14203f" stroke-width="0.9"/>
<circle cx="2271.2" cy="905.8" r="3.6" fill="#4a6ec8" stroke="#14203f" stroke-width="0.9"/>
<circle cx="2277.1" cy="906.6" r="3.6" fill="#4a6ec8" stroke="#14203f" stroke-width="0.9"/>
<circle cx="2265.9" cy="882.6" r="3.6" fill="#4a6ec8" stroke="#14203f" stroke-width="0.9"/>
<circle cx="2273.5" cy="898.9" r="3.6" fill="#4a6ec8" stroke="#14203f" stroke-width="0.9"/>
<circle cx="2258.5" cy="907.7" r="3.6" fill="#4a6ec8" stroke="#14203f" stroke-width="0.9"/>
<circle cx="2270.0" cy="882.5" r="3.6" fill="#4a6ec8" stroke="#14203f" stroke-width="0.9"/>
<circle cx="2272.4" cy="877.8" r="3.6" fill="#4a6ec8" stroke="#14203f" stroke-width="0.9"/>
<circle cx="2259.2" cy="900.2" r="3.6" fill="#4a6ec8" stroke="#14203f" stroke-width="0.9"/>
<circle cx="2252.4" cy="895.5" r="3.6" fill="#4a6ec8" stroke="#14203f" stroke-width="0.9"/>
<circle cx="2254.5" cy="904.6" r="3.6" fill="#4a6ec8" stroke="#14203f" stroke-width="0.9"/>
<circle cx="2260.7" cy="897.4" r="3.6" fill="#4a6ec8" stroke="#14203f" stroke-width="0.9"/>
<circle cx="2253.0" cy="890.5" r="3.6" fill="#4a6ec8" stroke="#14203f" stroke-width="0.9"/>
<circle cx="2277.5" cy="900.9" r="3.6" fill="#4a6ec8" stroke="#14203f" stroke-width="0.9"/>
<circle cx="2249.6" cy="907.0" r="3.6" fill="#4a6ec8" stroke="#14203f" stroke-width="0.9"/>
<circle cx="2276.9" cy="890.1" r="3.6" fill="#4a6ec8" stroke="#14203f" stroke-width="0.9"/>
<circle cx="2282.2" cy="881.2" r="3.6" fill="#4a6ec8" stroke="#14203f" stroke-width="0.9"/>
<circle cx="2267.1" cy="909.5" r="3.6" fill="#4a6ec8" stroke="#14203f" stroke-width="0.9"/>
<circle cx="2281.1" cy="911.6" r="3.6" fill="#4a6ec8" stroke="#14203f" stroke-width="0.9"/>
<circle cx="2257.1" cy="871.9" r="3.6" fill="#4a6ec8" stroke="#14203f" stroke-width="0.9"/>
<circle cx="2271.9" cy="876.4" r="3.6" fill="#4a6ec8" stroke="#14203f" stroke-width="0.9"/>
<circle cx="2266.7" cy="878.3" r="3.6" fill="#4a6ec8" stroke="#14203f" stroke-width="0.9"/>
<circle cx="2235.0" cy="902.0" r="3.6" fill="#4a6ec8" stroke="#14203f" stroke-width="0.9"/>
<circle cx="2252.0" cy="914.0" r="3.6" fill="#4a6ec8" stroke="#14203f" stroke-width="0.9"/>
<circle cx="2265.0" cy="927.0" r="3.6" fill="#4a6ec8" stroke="#14203f" stroke-width="0.9"/>
<circle cx="2240.0" cy="893.0" r="3.6" fill="#4a6ec8" stroke="#14203f" stroke-width="0.9"/>
<circle cx="2285.0" cy="915.0" r="3.6" fill="#4a6ec8" stroke="#14203f" stroke-width="0.9"/>
<circle cx="2284.0" cy="888.0" r="3.6" fill="#4a6ec8" stroke="#14203f" stroke-width="0.9"/>
<text x="2056.7" y="1111.5" text-anchor="middle" font-family="Liberation Sans" font-size="10" fill="#222">-25</text>
<text x="2130.4" y="1111.5" text-anchor="middle" font-family="Liberation Sans" font-size="10" fill="#222">-12.5</text>
<text x="2204.1" y="1111.5" text-anchor="middle" font-family="Liberation Sans" font-size="10" fill="#222">0</text>
<text x="2277.7" y="1111.5" text-anchor="middle" font-family="Liberation Sans" font-size="10" fill="#222">12.5</text>
<text x="2351.4" y="1111.5" text-anchor="middle" font-family="Liberation Sans" font-size="10" fill="#222">25</text>
<text x="2052.7" y="844.5" text-anchor="end" font-family="Liberation Sans" font-size="10" fill="#222">25</text>
<text x="2356.4" y="844.5" text-anchor="start" font-family="Liberation Sans" font-size="10" fill="#222">25</text>
<text x="2052.7" y="908.8" text-anchor="end" font-family="Liberation Sans" font-size="10" fill="#222">12.5</text>
<text x="2356.4" y="908.8" text-anchor="start" font-family="Liberation Sans" font-size="10" fill="#222">12.5</text>
<text x="2052.7" y="973.0" text-anchor="end" font-family="Liberation Sans" font-size="10" fill="#222">0</text>
<text x="2356.4" y="973.0" text-anchor="start" font-family="Liberation Sans" font-size="10" fill="#222">0</text>
<text x="2052.7" y="1037.2" text-anchor="end" font-family="Liberation Sans" font-size="10" fill="#222">-12.5</text>
<text x="2356.4" y="1037.2" text-anchor="start" font-family="Liberation Sans" font-size="10" fill="#222">-12.5</text>
<text x="2052.7" y="1101.5" text-anchor="end" font-family="Liberation Sans" font-size="10" fill="#222">-25</text>
<text x="2356.4" y="1101.5" text-anchor="start" font-family="Liberation Sans" font-size="10" fill="#222">-25</text>
<text x="2351.4" y="834.5" text-anchor="middle" font-family="Liberation Sans" font-size="10" fill="#222">25</text><text x="2386" y="968.5" transform="rotate(90 2386 968.5)" text-anchor="middle" font-family="Liberation Sans" font-weight="bold" font-size="11.5" fill="#222" dy="4">Vertical Break (inches)</text>
<text x="2204.1" y="1131.5" text-anchor="middle" font-family="Liberation Sans" font-weight="bold" font-size="12" fill="#111" letter-spacing="-0.3">Horizontal Break (inches)</text>
<text x="2204.1" y="1148.5" text-anchor="middle" font-family="Liberation Sans" font-size="10" fill="#222" letter-spacing="-0.2">Pitch movement from pitcher's POV</text>
</svg>
<svg class="a" style="left:1990px;top:1179.5px" width="420" height="400" viewBox="1990 1179.5 420 400">
<line x1="2130.4" y1="1269.5" x2="2130.4" y2="1526.5" stroke="#d3d3d3" stroke-width="1.3" stroke-dasharray="7,6"/>
<line x1="2277.7" y1="1269.5" x2="2277.7" y2="1526.5" stroke="#d3d3d3" stroke-width="1.3" stroke-dasharray="7,6"/>
<line x1="2056.7" y1="1462.2" x2="2351.4" y2="1462.2" stroke="#d3d3d3" stroke-width="1.3" stroke-dasharray="7,6"/>
<line x1="2056.7" y1="1333.8" x2="2351.4" y2="1333.8" stroke="#d3d3d3" stroke-width="1.3" stroke-dasharray="7,6"/>
<line x1="2204.1" y1="1269.5" x2="2204.1" y2="1526.5" stroke="#333" stroke-width="2.6" stroke-dasharray="9,7"/>
<line x1="2056.7" y1="1398.0" x2="2351.4" y2="1398.0" stroke="#333" stroke-width="2.6" stroke-dasharray="9,7"/>
<rect x="2056.7" y="1269.5" width="294.7" height="257" fill="none" stroke="#aaa" stroke-width="1.6"/>
<circle cx="2322.7" cy="1388.4" r="3.7" fill="#e2e055" stroke="#4a4a18" stroke-width="0.9"/>
<circle cx="2317.1" cy="1378.2" r="3.7" fill="#e2e055" stroke="#4a4a18" stroke-width="0.9"/>
<circle cx="2311.5" cy="1374.1" r="3.7" fill="#e2e055" stroke="#4a4a18" stroke-width="0.9"/>
<circle cx="2315.2" cy="1381.2" r="3.7" fill="#e2e055" stroke="#4a4a18" stroke-width="0.9"/>
<circle cx="2316.1" cy="1372.4" r="3.7" fill="#e2e055" stroke="#4a4a18" stroke-width="0.9"/>
<circle cx="2331.9" cy="1381.7" r="3.7" fill="#e2e055" stroke="#4a4a18" stroke-width="0.9"/>
<circle cx="2326.3" cy="1395.3" r="3.7" fill="#e2e055" stroke="#4a4a18" stroke-width="0.9"/>
<circle cx="2301.3" cy="1356.1" r="3.7" fill="#e2e055" stroke="#4a4a18" stroke-width="0.9"/>
<circle cx="2324.8" cy="1373.0" r="3.7" fill="#e2e055" stroke="#4a4a18" stroke-width="0.9"/>
<circle cx="2311.9" cy="1374.6" r="3.7" fill="#e2e055" stroke="#4a4a18" stroke-width="0.9"/>
<circle cx="2312.4" cy="1362.5" r="3.7" fill="#e2e055" stroke="#4a4a18" stroke-width="0.9"/>
<circle cx="2309.9" cy="1372.0" r="3.7" fill="#e2e055" stroke="#4a4a18" stroke-width="0.9"/>
<circle cx="2310.8" cy="1347.6" r="3.7" fill="#e2e055" stroke="#4a4a18" stroke-width="0.9"/>
<circle cx="2320.0" cy="1382.3" r="3.7" fill="#e2e055" stroke="#4a4a18" stroke-width="0.9"/>
<circle cx="2292.0" cy="1368.5" r="3.7" fill="#e2e055" stroke="#4a4a18" stroke-width="0.9"/>
<circle cx="2311.3" cy="1386.2" r="3.7" fill="#e2e055" stroke="#4a4a18" stroke-width="0.9"/>
<circle cx="2311.0" cy="1396.0" r="3.7" fill="#e2e055" stroke="#4a4a18" stroke-width="0.9"/>
<circle cx="2311.2" cy="1365.0" r="3.7" fill="#e2e055" stroke="#4a4a18" stroke-width="0.9"/>
<circle cx="2303.6" cy="1387.7" r="3.7" fill="#e2e055" stroke="#4a4a18" stroke-width="0.9"/>
<circle cx="2304.3" cy="1388.9" r="3.7" fill="#e2e055" stroke="#4a4a18" stroke-width="0.9"/>
<circle cx="2322.2" cy="1385.7" r="3.7" fill="#e2e055" stroke="#4a4a18" stroke-width="0.9"/>
<circle cx="2322.2" cy="1375.7" r="3.7" fill="#e2e055" stroke="#4a4a18" stroke-width="0.9"/>
<circle cx="2310.9" cy="1370.3" r="3.7" fill="#e2e055" stroke="#4a4a18" stroke-width="0.9"/>
<circle cx="2304.3" cy="1357.7" r="3.7" fill="#e2e055" stroke="#4a4a18" stroke-width="0.9"/>
<circle cx="2304.9" cy="1364.1" r="3.7" fill="#e2e055" stroke="#4a4a18" stroke-width="0.9"/>
<circle cx="2295.3" cy="1379.9" r="3.7" fill="#e2e055" stroke="#4a4a18" stroke-width="0.9"/>
<circle cx="2316.0" cy="1373.6" r="3.7" fill="#e2e055" stroke="#4a4a18" stroke-width="0.9"/>
<circle cx="2326.1" cy="1390.2" r="3.7" fill="#e2e055" stroke="#4a4a18" stroke-width="0.9"/>
<circle cx="2322.5" cy="1370.2" r="3.7" fill="#e2e055" stroke="#4a4a18" stroke-width="0.9"/>
<circle cx="2294.6" cy="1385.3" r="3.7" fill="#e2e055" stroke="#4a4a18" stroke-width="0.9"/>
<circle cx="2314.4" cy="1387.4" r="3.7" fill="#e2e055" stroke="#4a4a18" stroke-width="0.9"/>
<circle cx="2315.6" cy="1394.4" r="3.7" fill="#e2e055" stroke="#4a4a18" stroke-width="0.9"/>
<circle cx="2307.8" cy="1386.7" r="3.7" fill="#e2e055" stroke="#4a4a18" stroke-width="0.9"/>
<circle cx="2301.2" cy="1348.0" r="3.7" fill="#e2e055" stroke="#4a4a18" stroke-width="0.9"/>
<circle cx="2306.1" cy="1397.5" r="3.7" fill="#e2e055" stroke="#4a4a18" stroke-width="0.9"/>
<circle cx="2292.6" cy="1391.2" r="3.7" fill="#e2e055" stroke="#4a4a18" stroke-width="0.9"/>
<circle cx="2303.5" cy="1372.8" r="3.7" fill="#e2e055" stroke="#4a4a18" stroke-width="0.9"/>
<circle cx="2311.5" cy="1380.8" r="3.7" fill="#e2e055" stroke="#4a4a18" stroke-width="0.9"/>
<circle cx="2300.3" cy="1379.6" r="3.7" fill="#e2e055" stroke="#4a4a18" stroke-width="0.9"/>
<circle cx="2315.9" cy="1388.9" r="3.7" fill="#e2e055" stroke="#4a4a18" stroke-width="0.9"/>
<circle cx="2302.7" cy="1398.2" r="3.7" fill="#e2e055" stroke="#4a4a18" stroke-width="0.9"/>
<circle cx="2332.0" cy="1409.4" r="3.7" fill="#e2e055" stroke="#4a4a18" stroke-width="0.9"/>
<circle cx="2296.3" cy="1380.2" r="3.7" fill="#e2e055" stroke="#4a4a18" stroke-width="0.9"/>
<circle cx="2290.6" cy="1382.9" r="3.7" fill="#e2e055" stroke="#4a4a18" stroke-width="0.9"/>
<circle cx="2317.1" cy="1363.1" r="3.7" fill="#e2e055" stroke="#4a4a18" stroke-width="0.9"/>
<circle cx="2293.6" cy="1380.4" r="3.7" fill="#e2e055" stroke="#4a4a18" stroke-width="0.9"/>
<circle cx="2317.9" cy="1367.7" r="3.7" fill="#e2e055" stroke="#4a4a18" stroke-width="0.9"/>
<circle cx="2308.1" cy="1345.2" r="3.7" fill="#e2e055" stroke="#4a4a18" stroke-width="0.9"/>
<circle cx="2303.2" cy="1379.9" r="3.7" fill="#e2e055" stroke="#4a4a18" stroke-width="0.9"/>
<circle cx="2312.7" cy="1398.6" r="3.7" fill="#e2e055" stroke="#4a4a18" stroke-width="0.9"/>
<circle cx="2298.4" cy="1348.7" r="3.7" fill="#e2e055" stroke="#4a4a18" stroke-width="0.9"/>
<circle cx="2316.0" cy="1370.3" r="3.7" fill="#e2e055" stroke="#4a4a18" stroke-width="0.9"/>
<circle cx="2314.2" cy="1387.3" r="3.7" fill="#e2e055" stroke="#4a4a18" stroke-width="0.9"/>
<circle cx="2317.6" cy="1396.7" r="3.7" fill="#e2e055" stroke="#4a4a18" stroke-width="0.9"/>
<circle cx="2325.9" cy="1356.4" r="3.7" fill="#e2e055" stroke="#4a4a18" stroke-width="0.9"/>
<circle cx="2310.3" cy="1404.0" r="3.7" fill="#e2e055" stroke="#4a4a18" stroke-width="0.9"/>
<circle cx="2306.5" cy="1390.6" r="3.7" fill="#e2e055" stroke="#4a4a18" stroke-width="0.9"/>
<circle cx="2310.4" cy="1372.5" r="3.7" fill="#e2e055" stroke="#4a4a18" stroke-width="0.9"/>
<circle cx="2328.4" cy="1391.5" r="3.7" fill="#e2e055" stroke="#4a4a18" stroke-width="0.9"/>
<circle cx="2308.3" cy="1389.8" r="3.7" fill="#e2e055" stroke="#4a4a18" stroke-width="0.9"/>
<circle cx="2296.6" cy="1368.6" r="3.7" fill="#e2e055" stroke="#4a4a18" stroke-width="0.9"/>
<circle cx="2320.9" cy="1378.5" r="3.7" fill="#e2e055" stroke="#4a4a18" stroke-width="0.9"/>
<circle cx="2299.3" cy="1383.8" r="3.7" fill="#e2e055" stroke="#4a4a18" stroke-width="0.9"/>
<circle cx="2314.6" cy="1394.7" r="3.7" fill="#e2e055" stroke="#4a4a18" stroke-width="0.9"/>
<circle cx="2321.5" cy="1374.4" r="3.7" fill="#e2e055" stroke="#4a4a18" stroke-width="0.9"/>
<circle cx="2305.7" cy="1376.2" r="3.7" fill="#e2e055" stroke="#4a4a18" stroke-width="0.9"/>
<circle cx="2308.5" cy="1397.0" r="3.7" fill="#e2e055" stroke="#4a4a18" stroke-width="0.9"/>
<circle cx="2328.5" cy="1395.6" r="3.7" fill="#e2e055" stroke="#4a4a18" stroke-width="0.9"/>
<circle cx="2315.2" cy="1374.8" r="3.7" fill="#e2e055" stroke="#4a4a18" stroke-width="0.9"/>
<circle cx="2320.9" cy="1373.5" r="3.7" fill="#e2e055" stroke="#4a4a18" stroke-width="0.9"/>
<circle cx="2313.6" cy="1356.3" r="3.7" fill="#e2e055" stroke="#4a4a18" stroke-width="0.9"/>
<circle cx="2306.3" cy="1396.7" r="3.7" fill="#e2e055" stroke="#4a4a18" stroke-width="0.9"/>
<circle cx="2299.7" cy="1358.6" r="3.7" fill="#e2e055" stroke="#4a4a18" stroke-width="0.9"/>
<circle cx="2309.2" cy="1399.7" r="3.7" fill="#e2e055" stroke="#4a4a18" stroke-width="0.9"/>
<circle cx="2327.0" cy="1373.3" r="3.7" fill="#e2e055" stroke="#4a4a18" stroke-width="0.9"/>
<circle cx="2305.7" cy="1376.6" r="3.7" fill="#e2e055" stroke="#4a4a18" stroke-width="0.9"/>
<circle cx="2300.8" cy="1378.5" r="3.7" fill="#e2e055" stroke="#4a4a18" stroke-width="0.9"/>
<circle cx="2307.7" cy="1358.8" r="3.7" fill="#e2e055" stroke="#4a4a18" stroke-width="0.9"/>
<circle cx="2304.6" cy="1374.7" r="3.7" fill="#e2e055" stroke="#4a4a18" stroke-width="0.9"/>
<circle cx="2301.5" cy="1363.5" r="3.7" fill="#e2e055" stroke="#4a4a18" stroke-width="0.9"/>
<circle cx="2321.0" cy="1402.6" r="3.7" fill="#e2e055" stroke="#4a4a18" stroke-width="0.9"/>
<circle cx="2307.8" cy="1372.5" r="3.7" fill="#e2e055" stroke="#4a4a18" stroke-width="0.9"/>
<circle cx="2316.5" cy="1375.0" r="3.7" fill="#e2e055" stroke="#4a4a18" stroke-width="0.9"/>
<circle cx="2302.4" cy="1396.1" r="3.7" fill="#e2e055" stroke="#4a4a18" stroke-width="0.9"/>
<circle cx="2299.5" cy="1368.5" r="3.7" fill="#e2e055" stroke="#4a4a18" stroke-width="0.9"/>
<circle cx="2303.7" cy="1366.5" r="3.7" fill="#e2e055" stroke="#4a4a18" stroke-width="0.9"/>
<circle cx="2308.4" cy="1385.5" r="3.7" fill="#e2e055" stroke="#4a4a18" stroke-width="0.9"/>
<circle cx="2326.9" cy="1386.6" r="3.7" fill="#e2e055" stroke="#4a4a18" stroke-width="0.9"/>
<circle cx="2311.4" cy="1361.7" r="3.7" fill="#e2e055" stroke="#4a4a18" stroke-width="0.9"/>
<circle cx="2310.3" cy="1365.8" r="3.7" fill="#e2e055" stroke="#4a4a18" stroke-width="0.9"/>
<circle cx="2309.9" cy="1390.7" r="3.7" fill="#e2e055" stroke="#4a4a18" stroke-width="0.9"/>
<circle cx="2313.2" cy="1375.3" r="3.7" fill="#e2e055" stroke="#4a4a18" stroke-width="0.9"/>
<circle cx="2302.7" cy="1377.7" r="3.7" fill="#e2e055" stroke="#4a4a18" stroke-width="0.9"/>
<circle cx="2312.2" cy="1365.9" r="3.7" fill="#e2e055" stroke="#4a4a18" stroke-width="0.9"/>
<circle cx="2305.4" cy="1389.5" r="3.7" fill="#e2e055" stroke="#4a4a18" stroke-width="0.9"/>
<circle cx="2292.7" cy="1372.2" r="3.7" fill="#e2e055" stroke="#4a4a18" stroke-width="0.9"/>
<circle cx="2298.2" cy="1398.1" r="3.7" fill="#e2e055" stroke="#4a4a18" stroke-width="0.9"/>
<circle cx="2317.7" cy="1384.7" r="3.7" fill="#e2e055" stroke="#4a4a18" stroke-width="0.9"/>
<circle cx="2315.4" cy="1381.7" r="3.7" fill="#e2e055" stroke="#4a4a18" stroke-width="0.9"/>
<circle cx="2314.2" cy="1357.4" r="3.7" fill="#e2e055" stroke="#4a4a18" stroke-width="0.9"/>
<circle cx="2313.8" cy="1385.7" r="3.7" fill="#e2e055" stroke="#4a4a18" stroke-width="0.9"/>
<circle cx="2295.3" cy="1388.7" r="3.7" fill="#e2e055" stroke="#4a4a18" stroke-width="0.9"/>
<circle cx="2318.3" cy="1358.2" r="3.7" fill="#e2e055" stroke="#4a4a18" stroke-width="0.9"/>
<circle cx="2305.8" cy="1374.0" r="3.7" fill="#e2e055" stroke="#4a4a18" stroke-width="0.9"/>
<circle cx="2305.2" cy="1383.1" r="3.7" fill="#e2e055" stroke="#4a4a18" stroke-width="0.9"/>
<circle cx="2297.0" cy="1375.1" r="3.7" fill="#e2e055" stroke="#4a4a18" stroke-width="0.9"/>
<circle cx="2313.5" cy="1387.4" r="3.7" fill="#e2e055" stroke="#4a4a18" stroke-width="0.9"/>
<circle cx="2311.5" cy="1374.9" r="3.7" fill="#e2e055" stroke="#4a4a18" stroke-width="0.9"/>
<circle cx="2318.6" cy="1352.1" r="3.7" fill="#e2e055" stroke="#4a4a18" stroke-width="0.9"/>
<circle cx="2321.3" cy="1374.0" r="3.7" fill="#e2e055" stroke="#4a4a18" stroke-width="0.9"/>
<circle cx="2297.2" cy="1372.4" r="3.7" fill="#e2e055" stroke="#4a4a18" stroke-width="0.9"/>
<circle cx="2290.8" cy="1351.4" r="3.7" fill="#e2e055" stroke="#4a4a18" stroke-width="0.9"/>
<circle cx="2307.4" cy="1367.9" r="3.7" fill="#e2e055" stroke="#4a4a18" stroke-width="0.9"/>
<circle cx="2319.1" cy="1366.5" r="3.7" fill="#e2e055" stroke="#4a4a18" stroke-width="0.9"/>
<circle cx="2296.8" cy="1365.5" r="3.7" fill="#e2e055" stroke="#4a4a18" stroke-width="0.9"/>
<circle cx="2329.9" cy="1378.3" r="3.7" fill="#e2e055" stroke="#4a4a18" stroke-width="0.9"/>
<circle cx="2304.3" cy="1365.1" r="3.7" fill="#e2e055" stroke="#4a4a18" stroke-width="0.9"/>
<circle cx="2298.9" cy="1375.9" r="3.7" fill="#e2e055" stroke="#4a4a18" stroke-width="0.9"/>
<circle cx="2315.7" cy="1393.0" r="3.7" fill="#e2e055" stroke="#4a4a18" stroke-width="0.9"/>
<circle cx="2323.6" cy="1381.5" r="3.7" fill="#e2e055" stroke="#4a4a18" stroke-width="0.9"/>
<circle cx="2303.7" cy="1366.8" r="3.7" fill="#e2e055" stroke="#4a4a18" stroke-width="0.9"/>
<circle cx="2285.6" cy="1364.8" r="3.7" fill="#e2e055" stroke="#4a4a18" stroke-width="0.9"/>
<circle cx="2315.6" cy="1373.6" r="3.7" fill="#e2e055" stroke="#4a4a18" stroke-width="0.9"/>
<circle cx="2315.0" cy="1360.5" r="3.7" fill="#e2e055" stroke="#4a4a18" stroke-width="0.9"/>
<circle cx="2320.9" cy="1381.8" r="3.7" fill="#e2e055" stroke="#4a4a18" stroke-width="0.9"/>
<circle cx="2311.5" cy="1383.2" r="3.7" fill="#e2e055" stroke="#4a4a18" stroke-width="0.9"/>
<circle cx="2286.4" cy="1370.8" r="3.7" fill="#e2e055" stroke="#4a4a18" stroke-width="0.9"/>
<circle cx="2301.1" cy="1401.6" r="3.7" fill="#e2e055" stroke="#4a4a18" stroke-width="0.9"/>
<circle cx="2309.0" cy="1371.4" r="3.7" fill="#e2e055" stroke="#4a4a18" stroke-width="0.9"/>
<circle cx="2320.4" cy="1364.3" r="3.7" fill="#e2e055" stroke="#4a4a18" stroke-width="0.9"/>
<circle cx="2326.6" cy="1368.9" r="3.7" fill="#e2e055" stroke="#4a4a18" stroke-width="0.9"/>
<circle cx="2310.3" cy="1366.1" r="3.7" fill="#e2e055" stroke="#4a4a18" stroke-width="0.9"/>
<circle cx="2319.9" cy="1349.8" r="3.7" fill="#e2e055" stroke="#4a4a18" stroke-width="0.9"/>
<circle cx="2318.6" cy="1367.3" r="3.7" fill="#e2e055" stroke="#4a4a18" stroke-width="0.9"/>
<circle cx="2311.5" cy="1363.0" r="3.7" fill="#e2e055" stroke="#4a4a18" stroke-width="0.9"/>
<circle cx="2313.5" cy="1380.4" r="3.7" fill="#e2e055" stroke="#4a4a18" stroke-width="0.9"/>
<circle cx="2317.5" cy="1382.1" r="3.7" fill="#e2e055" stroke="#4a4a18" stroke-width="0.9"/>
<circle cx="2317.9" cy="1390.9" r="3.7" fill="#e2e055" stroke="#4a4a18" stroke-width="0.9"/>
<circle cx="2306.7" cy="1362.7" r="3.7" fill="#e2e055" stroke="#4a4a18" stroke-width="0.9"/>
<circle cx="2296.9" cy="1386.8" r="3.7" fill="#e2e055" stroke="#4a4a18" stroke-width="0.9"/>
<circle cx="2306.9" cy="1391.7" r="3.7" fill="#e2e055" stroke="#4a4a18" stroke-width="0.9"/>
<circle cx="2311.5" cy="1364.8" r="3.7" fill="#e2e055" stroke="#4a4a18" stroke-width="0.9"/>
<circle cx="2321.0" cy="1403.3" r="3.7" fill="#e2e055" stroke="#4a4a18" stroke-width="0.9"/>
<circle cx="2309.0" cy="1365.8" r="3.7" fill="#e2e055" stroke="#4a4a18" stroke-width="0.9"/>
<circle cx="2301.7" cy="1389.6" r="3.7" fill="#e2e055" stroke="#4a4a18" stroke-width="0.9"/>
<circle cx="2304.6" cy="1372.7" r="3.7" fill="#e2e055" stroke="#4a4a18" stroke-width="0.9"/>
<circle cx="2318.5" cy="1378.2" r="3.7" fill="#e2e055" stroke="#4a4a18" stroke-width="0.9"/>
<circle cx="2312.3" cy="1370.9" r="3.7" fill="#e2e055" stroke="#4a4a18" stroke-width="0.9"/>
<circle cx="2304.0" cy="1380.1" r="3.7" fill="#e2e055" stroke="#4a4a18" stroke-width="0.9"/>
<circle cx="2312.7" cy="1385.7" r="3.7" fill="#e2e055" stroke="#4a4a18" stroke-width="0.9"/>
<circle cx="2305.5" cy="1382.5" r="3.7" fill="#e2e055" stroke="#4a4a18" stroke-width="0.9"/>
<circle cx="2316.2" cy="1379.1" r="3.7" fill="#e2e055" stroke="#4a4a18" stroke-width="0.9"/>
<circle cx="2317.3" cy="1391.1" r="3.7" fill="#e2e055" stroke="#4a4a18" stroke-width="0.9"/>
<circle cx="2313.2" cy="1379.0" r="3.7" fill="#e2e055" stroke="#4a4a18" stroke-width="0.9"/>
<circle cx="2300.3" cy="1382.3" r="3.7" fill="#e2e055" stroke="#4a4a18" stroke-width="0.9"/>
<circle cx="2310.0" cy="1374.0" r="3.7" fill="#e2e055" stroke="#4a4a18" stroke-width="0.9"/>
<circle cx="2301.9" cy="1385.5" r="3.7" fill="#e2e055" stroke="#4a4a18" stroke-width="0.9"/>
<circle cx="2339.1" cy="1383.6" r="3.7" fill="#e2e055" stroke="#4a4a18" stroke-width="0.9"/>
<circle cx="2312.0" cy="1383.7" r="3.7" fill="#e2e055" stroke="#4a4a18" stroke-width="0.9"/>
<circle cx="2304.5" cy="1379.2" r="3.7" fill="#e2e055" stroke="#4a4a18" stroke-width="0.9"/>
<circle cx="2303.7" cy="1369.7" r="3.7" fill="#e2e055" stroke="#4a4a18" stroke-width="0.9"/>
<circle cx="2313.6" cy="1381.0" r="3.7" fill="#e2e055" stroke="#4a4a18" stroke-width="0.9"/>
<circle cx="2309.8" cy="1367.7" r="3.7" fill="#e2e055" stroke="#4a4a18" stroke-width="0.9"/>
<circle cx="2313.9" cy="1363.9" r="3.7" fill="#e2e055" stroke="#4a4a18" stroke-width="0.9"/>
<circle cx="2319.5" cy="1373.5" r="3.7" fill="#e2e055" stroke="#4a4a18" stroke-width="0.9"/>
<circle cx="2311.0" cy="1388.2" r="3.7" fill="#e2e055" stroke="#4a4a18" stroke-width="0.9"/>
<circle cx="2317.1" cy="1361.2" r="3.7" fill="#e2e055" stroke="#4a4a18" stroke-width="0.9"/>
<circle cx="2308.3" cy="1382.8" r="3.7" fill="#e2e055" stroke="#4a4a18" stroke-width="0.9"/>
<circle cx="2299.0" cy="1346.7" r="3.7" fill="#e2e055" stroke="#4a4a18" stroke-width="0.9"/>
<circle cx="2310.2" cy="1377.4" r="3.7" fill="#e2e055" stroke="#4a4a18" stroke-width="0.9"/>
<circle cx="2315.7" cy="1379.1" r="3.7" fill="#e2e055" stroke="#4a4a18" stroke-width="0.9"/>
<circle cx="2312.4" cy="1381.1" r="3.7" fill="#e2e055" stroke="#4a4a18" stroke-width="0.9"/>
<circle cx="2326.1" cy="1384.3" r="3.7" fill="#e2e055" stroke="#4a4a18" stroke-width="0.9"/>
<circle cx="2317.0" cy="1372.9" r="3.7" fill="#e2e055" stroke="#4a4a18" stroke-width="0.9"/>
<circle cx="2323.4" cy="1375.6" r="3.7" fill="#e2e055" stroke="#4a4a18" stroke-width="0.9"/>
<circle cx="2319.1" cy="1350.6" r="3.7" fill="#e2e055" stroke="#4a4a18" stroke-width="0.9"/>
<circle cx="2313.7" cy="1376.7" r="3.7" fill="#e2e055" stroke="#4a4a18" stroke-width="0.9"/>
<circle cx="2305.9" cy="1394.7" r="3.7" fill="#e2e055" stroke="#4a4a18" stroke-width="0.9"/>
<circle cx="2315.5" cy="1376.2" r="3.7" fill="#e2e055" stroke="#4a4a18" stroke-width="0.9"/>
<circle cx="2305.2" cy="1402.4" r="3.7" fill="#e2e055" stroke="#4a4a18" stroke-width="0.9"/>
<circle cx="2319.2" cy="1386.5" r="3.7" fill="#e2e055" stroke="#4a4a18" stroke-width="0.9"/>
<circle cx="2302.6" cy="1394.9" r="3.7" fill="#e2e055" stroke="#4a4a18" stroke-width="0.9"/>
<circle cx="2317.1" cy="1374.5" r="3.7" fill="#e2e055" stroke="#4a4a18" stroke-width="0.9"/>
<circle cx="2309.9" cy="1356.9" r="3.7" fill="#e2e055" stroke="#4a4a18" stroke-width="0.9"/>
<circle cx="2318.2" cy="1363.8" r="3.7" fill="#e2e055" stroke="#4a4a18" stroke-width="0.9"/>
<circle cx="2320.3" cy="1372.3" r="3.7" fill="#e2e055" stroke="#4a4a18" stroke-width="0.9"/>
<circle cx="2304.2" cy="1382.8" r="3.7" fill="#e2e055" stroke="#4a4a18" stroke-width="0.9"/>
<circle cx="2313.3" cy="1363.4" r="3.7" fill="#e2e055" stroke="#4a4a18" stroke-width="0.9"/>
<circle cx="2310.2" cy="1385.9" r="3.7" fill="#e2e055" stroke="#4a4a18" stroke-width="0.9"/>
<circle cx="2308.2" cy="1360.6" r="3.7" fill="#e2e055" stroke="#4a4a18" stroke-width="0.9"/>
<circle cx="2308.3" cy="1365.5" r="3.7" fill="#e2e055" stroke="#4a4a18" stroke-width="0.9"/>
<circle cx="2304.7" cy="1378.6" r="3.7" fill="#e2e055" stroke="#4a4a18" stroke-width="0.9"/>
<circle cx="2310.4" cy="1375.3" r="3.7" fill="#e2e055" stroke="#4a4a18" stroke-width="0.9"/>
<circle cx="2292.9" cy="1382.5" r="3.7" fill="#e2e055" stroke="#4a4a18" stroke-width="0.9"/>
<circle cx="2308.8" cy="1372.7" r="3.7" fill="#e2e055" stroke="#4a4a18" stroke-width="0.9"/>
<circle cx="2312.7" cy="1403.0" r="3.7" fill="#e2e055" stroke="#4a4a18" stroke-width="0.9"/>
<circle cx="2296.9" cy="1357.2" r="3.7" fill="#e2e055" stroke="#4a4a18" stroke-width="0.9"/>
<circle cx="2319.4" cy="1367.8" r="3.7" fill="#e2e055" stroke="#4a4a18" stroke-width="0.9"/>
<circle cx="2325.3" cy="1365.3" r="3.7" fill="#e2e055" stroke="#4a4a18" stroke-width="0.9"/>
<circle cx="2305.7" cy="1388.8" r="3.7" fill="#e2e055" stroke="#4a4a18" stroke-width="0.9"/>
<circle cx="2321.0" cy="1383.7" r="3.7" fill="#e2e055" stroke="#4a4a18" stroke-width="0.9"/>
<circle cx="2316.0" cy="1376.3" r="3.7" fill="#e2e055" stroke="#4a4a18" stroke-width="0.9"/>
<circle cx="2306.2" cy="1375.4" r="3.7" fill="#e2e055" stroke="#4a4a18" stroke-width="0.9"/>
<circle cx="2324.9" cy="1387.2" r="3.7" fill="#e2e055" stroke="#4a4a18" stroke-width="0.9"/>
<circle cx="2311.2" cy="1382.1" r="3.7" fill="#e2e055" stroke="#4a4a18" stroke-width="0.9"/>
<circle cx="2320.1" cy="1393.3" r="3.7" fill="#e2e055" stroke="#4a4a18" stroke-width="0.9"/>
<circle cx="2309.6" cy="1377.0" r="3.7" fill="#e2e055" stroke="#4a4a18" stroke-width="0.9"/>
<circle cx="2314.6" cy="1411.7" r="3.7" fill="#e2e055" stroke="#4a4a18" stroke-width="0.9"/>
<circle cx="2313.6" cy="1394.4" r="3.7" fill="#e2e055" stroke="#4a4a18" stroke-width="0.9"/>
<circle cx="2294.2" cy="1389.0" r="3.7" fill="#e2e055" stroke="#4a4a18" stroke-width="0.9"/>
<circle cx="2295.6" cy="1364.0" r="3.7" fill="#e2e055" stroke="#4a4a18" stroke-width="0.9"/>
<circle cx="2304.1" cy="1376.2" r="3.7" fill="#e2e055" stroke="#4a4a18" stroke-width="0.9"/>
<circle cx="2313.0" cy="1382.7" r="3.7" fill="#e2e055" stroke="#4a4a18" stroke-width="0.9"/>
<circle cx="2313.5" cy="1372.3" r="3.7" fill="#e2e055" stroke="#4a4a18" stroke-width="0.9"/>
<circle cx="2339.3" cy="1383.1" r="3.7" fill="#e2e055" stroke="#4a4a18" stroke-width="0.9"/>
<circle cx="2318.3" cy="1404.1" r="3.7" fill="#e2e055" stroke="#4a4a18" stroke-width="0.9"/>
<circle cx="2321.6" cy="1385.5" r="3.7" fill="#e2e055" stroke="#4a4a18" stroke-width="0.9"/>
<circle cx="2314.5" cy="1402.1" r="3.7" fill="#e2e055" stroke="#4a4a18" stroke-width="0.9"/>
<circle cx="2299.2" cy="1365.6" r="3.7" fill="#e2e055" stroke="#4a4a18" stroke-width="0.9"/>
<circle cx="2312.6" cy="1351.7" r="3.7" fill="#e2e055" stroke="#4a4a18" stroke-width="0.9"/>
<circle cx="2325.0" cy="1346.0" r="3.7" fill="#e2e055" stroke="#4a4a18" stroke-width="0.9"/>
<circle cx="2328.0" cy="1343.0" r="3.7" fill="#e2e055" stroke="#4a4a18" stroke-width="0.9"/>
<circle cx="2321.0" cy="1352.0" r="3.7" fill="#e2e055" stroke="#4a4a18" stroke-width="0.9"/>
<circle cx="2344.0" cy="1370.0" r="3.7" fill="#e2e055" stroke="#4a4a18" stroke-width="0.9"/>
<circle cx="2340.0" cy="1396.0" r="3.7" fill="#e2e055" stroke="#4a4a18" stroke-width="0.9"/>
<circle cx="2319.0" cy="1409.0" r="3.7" fill="#e2e055" stroke="#4a4a18" stroke-width="0.9"/>
<circle cx="2288.0" cy="1414.0" r="3.7" fill="#e2e055" stroke="#4a4a18" stroke-width="0.9"/>
<text x="2056.7" y="1263.5" text-anchor="middle" font-family="Liberation Sans" font-size="10" fill="#222">-25</text>
<text x="2130.4" y="1263.5" text-anchor="middle" font-family="Liberation Sans" font-size="10" fill="#222">-12.5</text>
<text x="2204.1" y="1263.5" text-anchor="middle" font-family="Liberation Sans" font-size="10" fill="#222">0</text>
<text x="2277.7" y="1263.5" text-anchor="middle" font-family="Liberation Sans" font-size="10" fill="#222">12.5</text>
<text x="2351.4" y="1263.5" text-anchor="middle" font-family="Liberation Sans" font-size="10" fill="#222">25</text>
<text x="2052.7" y="1273.5" text-anchor="end" font-family="Liberation Sans" font-size="10" fill="#222">25</text>
<text x="2356.4" y="1273.5" text-anchor="start" font-family="Liberation Sans" font-size="10" fill="#222">25</text>
<text x="2052.7" y="1337.8" text-anchor="end" font-family="Liberation Sans" font-size="10" fill="#222">12.5</text>
<text x="2356.4" y="1337.8" text-anchor="start" font-family="Liberation Sans" font-size="10" fill="#222">12.5</text>
<text x="2052.7" y="1402.0" text-anchor="end" font-family="Liberation Sans" font-size="10" fill="#222">0</text>
<text x="2356.4" y="1402.0" text-anchor="start" font-family="Liberation Sans" font-size="10" fill="#222">0</text>
<text x="2052.7" y="1466.2" text-anchor="end" font-family="Liberation Sans" font-size="10" fill="#222">-12.5</text>
<text x="2356.4" y="1466.2" text-anchor="start" font-family="Liberation Sans" font-size="10" fill="#222">-12.5</text>
<text x="2052.7" y="1530.5" text-anchor="end" font-family="Liberation Sans" font-size="10" fill="#222">-25</text>
<text x="2356.4" y="1530.5" text-anchor="start" font-family="Liberation Sans" font-size="10" fill="#222">-25</text>
<text x="2386" y="1397.5" transform="rotate(90 2386 1397.5)" text-anchor="middle" font-family="Liberation Sans" font-weight="bold" font-size="11.5" fill="#222" dy="4">Vertical Break (inches)</text>
<text x="2204" y="1208.5" text-anchor="middle" font-family="Liberation Sans" font-size="13" fill="#111" letter-spacing="-0.3">PitchType</text>
<circle cx="2023.7" cy="1216.2" r="4.3" fill="#dede52" stroke="#55551a" stroke-width="0.9"/>
<text x="2035" y="1220.5" font-family="Liberation Sans" font-size="11" fill="#222" letter-spacing="-0.2">Sinker</text>
</svg>

<svg class="a" style="left:790px;top:570px" width="190" height="190" viewBox="0 0 1343 1343">
<rect x="20" y="20" width="1245" height="1250" fill="#fff"/>
<path d="M20 1170 Q150 1060 400 1000 L880 995 Q1100 1050 1265 1140 V1270 H20z" fill="#f2f2f2"/>
<path d="M430 880 L870 880 L905 1000 Q800 1180 640 1260 Q500 1200 390 1000z" fill="#6e4331"/>
<path d="M390 1000 Q500 1200 640 1260 Q800 1180 905 1000" fill="none" stroke="#bdbdbd" stroke-width="28"/>
<path d="M260 1070 Q300 1190 380 1270" fill="none" stroke="#e23a36" stroke-width="12"/>
<path d="M1075 1100 Q1040 1190 990 1270" fill="none" stroke="#e23a36" stroke-width="12"/>
<path d="M400 560 Q400 420 640 410 Q880 420 880 560 Q880 820 780 910 Q640 1000 500 910 Q400 820 400 560z" fill="#84553c"/>
<ellipse cx="385" cy="620" rx="38" ry="85" fill="#74472f"/>
<ellipse cx="905" cy="620" rx="38" ry="85" fill="#74472f"/>
<ellipse cx="560" cy="560" rx="90" ry="60" fill="#8f6046" opacity="0.7"/>
<ellipse cx="740" cy="560" rx="90" ry="60" fill="#8f6046" opacity="0.7"/>
<path d="M470 470 q50 -25 110 -5" stroke="#2a1a10" stroke-width="14" fill="none"/><path d="M690 465 q60 -20 110 5" stroke="#2a1a10" stroke-width="14" fill="none"/><ellipse cx="530" cy="515" rx="42" ry="16" fill="#d9c8c0"/><ellipse cx="750" cy="515" rx="42" ry="16" fill="#d9c8c0"/><circle cx="535" cy="515" r="15" fill="#1a100a"/><circle cx="745" cy="515" r="15" fill="#1a100a"/>
<path d="M540 735 q100 50 200 0 q-100 80 -200 0z" fill="#f0e3df"/>
<path d="M560 790 q80 30 160 0" stroke="#a06a5c" stroke-width="14" fill="none"/>
<path d="M540 910 q100 70 200 0" stroke="#20140e" stroke-width="34" fill="none"/>
<g stroke="#1a1a1a" stroke-width="16" fill="none" stroke-linecap="round"><path d="M350 660 Q320 700 290 740"/><path d="M400 720 L400 770"/><path d="M920 560 L960 580"/><path d="M920 620 L960 640"/><path d="M920 690 L955 700"/><path d="M900 730 L890 770"/></g>
<path d="M380 460 Q380 420 420 420 L880 420 Q920 430 910 470 L900 560 Q860 480 640 470 Q420 480 390 560z" fill="#1c1c22"/>
<path d="M395 380 L425 150 Q440 80 640 75 Q840 80 858 150 L890 380z" fill="#18203a"/>
<path d="M335 395 Q340 375 400 372 L890 372 Q950 380 950 410 Q950 450 900 450 L380 450 Q330 445 335 395z" fill="#141a30"/>
<text x="640" y="272" text-anchor="middle" font-family="Liberation Serif" font-weight="bold" font-size="200" fill="#d83a3a" stroke="#f4f4f4" stroke-width="10" paint-order="stroke">B</text>
</svg>
<svg class="a" style="left:2440px;top:740px" width="438" height="400" viewBox="2440 740 438 400">
<defs><filter id="bl1" x="-30%" y="-30%" width="160%" height="160%"><feGaussianBlur stdDeviation="7"/></filter>
<filter id="bs1" x="-30%" y="-30%" width="160%" height="160%"><feGaussianBlur stdDeviation="4"/></filter>
<linearGradient id="lg1" x1="0" x2="1"><stop offset="0" stop-color="#3e6db3"/><stop offset="0.3" stop-color="#8dbbd9"/><stop offset="0.5" stop-color="#fbf8de"/><stop offset="0.72" stop-color="#eea061"/><stop offset="1" stop-color="#cb2f2c"/></linearGradient>
<clipPath id="cp1"><rect x="2549" y="840" width="254" height="400"/></clipPath></defs>
<defs><clipPath id="hc1"><rect x="2548" y="841" width="255" height="240"/></clipPath>
<filter id="hm1" filterUnits="userSpaceOnUse" x="2500" y="800" width="360" height="300" color-interpolation-filters="sRGB">
<feGaussianBlur in="SourceGraphic" stdDeviation="5.5" result="b"/>
<feColorMatrix in="b" type="matrix" values="0 0 0 1 0  0 0 0 1 0  0 0 0 1 0  0 0 0 1 0" result="m"/>
<feComponentTransfer in="m">
<feFuncR type="table" tableValues="0.36 0.36 0.38 0.50 0.70 0.98 0.96 0.92 0.84 0.80 0.78"/>
<feFuncG type="table" tableValues="0.56 0.56 0.59 0.70 0.84 0.97 0.75 0.51 0.27 0.20 0.18"/>
<feFuncB type="table" tableValues="0.79 0.79 0.80 0.85 0.90 0.84 0.51 0.31 0.20 0.18 0.16"/>
<feFuncA type="table" tableValues="0 1 1 1 1 1 1 1 1 1 1"/>
</feComponentTransfer></filter></defs>
<g clip-path="url(#hc1)"><g filter="url(#hm1)">
<path d="M2551 842 L2772 842 Q2790 870 2788 900 Q2803 930 2803 960 L2803 1014 Q2785 995 2760 1010 Q2740 1035 2715 1035 Q2700 1062 2680 1055 Q2660 1040 2640 1035 Q2630 1048 2612 1044 Q2603 1030 2610 1015 Q2596 990 2582 968 Q2570 940 2578 925 Q2560 905 2551 880 Z" fill="#000" fill-opacity="0.26"/>
<circle cx="2618" cy="1035" r="11" fill="#000" fill-opacity="0.26"/>
<circle cx="2695" cy="1049" r="11" fill="#000" fill-opacity="0.26"/>
<circle cx="2708" cy="856" r="8" fill="#000" fill-opacity="0.3"/>
<circle cx="2772" cy="974" r="7" fill="#000" fill-opacity="0.3"/>
<circle cx="2658" cy="999" r="7" fill="#000" fill-opacity="0.18"/>
<circle cx="2630" cy="945" r="8" fill="#000" fill-opacity="0.15"/>
<circle cx="2760" cy="890" r="9" fill="#000" fill-opacity="0.12"/>
<circle cx="2707.6" cy="997.3" r="8.0" fill="#000" fill-opacity="0.1"/>
<circle cx="2785.9" cy="996.9" r="8.6" fill="#000" fill-opacity="0.1"/>
<circle cx="2786.1" cy="978.4" r="8.5" fill="#000" fill-opacity="0.1"/>
<circle cx="2615.4" cy="956.9" r="6.9" fill="#000" fill-opacity="0.1"/>
<circle cx="2742.6" cy="878.6" r="8.0" fill="#000" fill-opacity="0.1"/>
<circle cx="2768.5" cy="888.7" r="5.1" fill="#000" fill-opacity="0.1"/>
<circle cx="2687.1" cy="984.3" r="5.0" fill="#000" fill-opacity="0.1"/>
<circle cx="2785.5" cy="986.9" r="8.8" fill="#000" fill-opacity="0.1"/>
<circle cx="2774.0" cy="907.0" r="5.8" fill="#000" fill-opacity="0.1"/>
<circle cx="2595.7" cy="875.7" r="4.3" fill="#000" fill-opacity="0.1"/>
<circle cx="2628.8" cy="969.0" r="4.0" fill="#000" fill-opacity="0.1"/>
<circle cx="2721.1" cy="914.9" r="5.5" fill="#000" fill-opacity="0.1"/>
<circle cx="2755.5" cy="944.1" r="5.6" fill="#000" fill-opacity="0.1"/>
<circle cx="2672.9" cy="989.8" r="4.3" fill="#000" fill-opacity="0.1"/>
<circle cx="2644.7" cy="964.0" r="4.0" fill="#000" fill-opacity="0.1"/>
<circle cx="2566.4" cy="882.9" r="8.8" fill="#000" fill-opacity="0.1"/>
<ellipse cx="2672" cy="872" rx="22" ry="28" fill="#000" fill-opacity="0.78"/>
<ellipse cx="2680" cy="895" rx="24" ry="14" fill="#000" fill-opacity="0.7"/>
<path d="M2611 872 Q2630 860 2656 866 L2662 892 Q2640 898 2614 886 Z" fill="#000" fill-opacity="0.64"/>
<circle cx="2624" cy="858" r="8" fill="#000" fill-opacity="0.62"/>
<ellipse cx="2710" cy="856" rx="7" ry="6" fill="#000" fill-opacity="0.2"/>
<ellipse cx="2664" cy="928" rx="20" ry="18" fill="#000" fill-opacity="0.82"/>
<ellipse cx="2703" cy="922" rx="15" ry="22" fill="#000" fill-opacity="0.74"/>
<ellipse cx="2690" cy="910" rx="18" ry="10" fill="#000" fill-opacity="0.7"/>
<ellipse cx="2692" cy="966" rx="13" ry="19" fill="#000" fill-opacity="0.64"/>
<ellipse cx="2734" cy="980" rx="14" ry="10" fill="#000" fill-opacity="0.62" transform="rotate(-30 2734 980)"/>
<ellipse cx="2747" cy="926" rx="11" ry="12" fill="#000" fill-opacity="0.72"/>
<circle cx="2772" cy="974" r="6" fill="#000" fill-opacity="0.2"/>
</g></g>
<rect x="2551.5" y="766.5" width="249" height="67.5" fill="#fff" stroke="#222" stroke-width="1.6"/>
<text x="2675" y="792" text-anchor="middle" font-family="Liberation Sans" font-size="22.5" fill="#111" letter-spacing="0.45">Pitch Frequency</text>
<text x="2555.5" y="820" font-family="Liberation Sans" font-weight="bold" font-size="15" fill="#111">Least</text>
<text x="2795" y="820" text-anchor="end" font-family="Liberation Sans" font-weight="bold" font-size="15" fill="#111">Most</text>
<rect x="2555.7" y="822" width="241.5" height="8" fill="url(#lg1)"/>
<rect x="2621.5" y="915" width="109" height="109" fill="none" stroke="#000" stroke-width="3.2" rx="1"/>
<g stroke="#000" stroke-width="1.8" stroke-dasharray="3.5,3.5" fill="none"><line x1="2623" y1="895" x2="2730" y2="895"/><line x1="2623" y1="1043" x2="2730" y2="1043"/><line x1="2602.5" y1="914" x2="2602.5" y2="1024"/><line x1="2749.5" y1="914" x2="2749.5" y2="1024"/></g>
<line x1="2465" y1="1101" x2="2878" y2="1101" stroke="#d8d8d8" stroke-width="1.2"/>
<path d="M2570 1122 l15 -20 h8 l-15 20z" fill="#000"/>
<path d="M2623 1113 h105 l-1 3 q-52 6 -103 0z" fill="#000"/>
<path d="M2760 1101 h7 l14 21 h-7z" fill="#000"/>
<text x="2780" y="1118" font-family="Liberation Sans" font-size="13" fill="#222" letter-spacing="-0.55">© TRUMEDIA 2024</text>
<g transform="translate(2455 815.0) scale(0.23436)">
<path d="M45 45 L50 78 L330 192 L338 165 Z" fill="#cdcdcd"/>
<path d="M220 120 Q225 60 285 62 Q345 68 345 135 L335 175 L300 215 L235 212 Q215 170 220 120Z" fill="#bcbcbc"/>
<path d="M225 110 Q240 62 290 64 Q345 72 343 140 L320 130 Q280 95 225 110Z" fill="#4a4a4a"/>
<path d="M300 150 Q330 140 345 160 L350 200 L320 210 Z" fill="#555"/>
<path d="M365 175 L415 185 L440 420 L350 428 L330 360 L380 300 Z" fill="#8c8c8c"/>
<path d="M368 275 L430 290 L432 318 L366 305 Z" fill="#ededed"/>
<path d="M100 285 L130 232 L205 220 L312 290 L372 362 L302 425 L242 655 L58 618 L70 540 L62 400 Z" fill="#262626"/>
<path d="M120 240 L330 172 L358 215 L165 325 Z" fill="#2b2b2b"/>
<path d="M150 300 L320 225 L335 245 L180 335 Z" fill="#9a9a9a"/>
<path d="M110 330 L230 360 L200 420 L115 400Z" fill="#3e3e3e"/>
<path d="M58 572 L242 642 L236 668 L52 606 Z" fill="#ececec"/>
<defs><linearGradient id="lgA" x1="0" y1="0" x2="0" y2="1"><stop offset="0" stop-color="#0c0c0c"/><stop offset="0.62" stop-color="#121212"/><stop offset="1" stop-color="#7a7a7a"/></linearGradient></defs><path d="M50 620 L232 658 L292 900 L277 1190 L200 1232 L122 1300 L60 1310 L110 1150 L150 980 L50 760 Z" fill="url(#lgA)" stroke="#bdbdbd" stroke-width="8"/>
<path d="M70 700 L160 740 L190 940 L150 900 Z" fill="#2e2e2e"/>
<path d="M110 1100 L230 1090 L277 1190 L200 1232 L122 1300 L60 1310 Z" fill="#555" opacity="0.6"/>
<path d="M60 1312 L110 1232 L200 1192 L285 1182 L352 1222 L330 1248 L205 1252 L272 1302 L100 1312 Z" fill="#8a8a8a"/>
<path d="M190 1185 L285 1180 L352 1222 L330 1248 L210 1245 Z" fill="#b0b0b0"/>
</g>
</svg>
<svg class="a" style="left:2440px;top:1170px" width="438" height="400" viewBox="2440 1170 438 400">
<defs><filter id="bl2" x="-30%" y="-30%" width="160%" height="160%"><feGaussianBlur stdDeviation="7"/></filter>
<filter id="bs2" x="-30%" y="-30%" width="160%" height="160%"><feGaussianBlur stdDeviation="4"/></filter>
<linearGradient id="lg2" x1="0" x2="1"><stop offset="0" stop-color="#3e6db3"/><stop offset="0.3" stop-color="#8dbbd9"/><stop offset="0.5" stop-color="#fbf8de"/><stop offset="0.72" stop-color="#eea061"/><stop offset="1" stop-color="#cb2f2c"/></linearGradient>
<clipPath id="cp2"><rect x="2549" y="1270" width="254" height="400"/></clipPath></defs>
<defs><clipPath id="hc2"><rect x="2548" y="1276" width="255" height="230"/></clipPath>
<filter id="hm2" filterUnits="userSpaceOnUse" x="2500" y="1230" width="360" height="300" color-interpolation-filters="sRGB">
<feGaussianBlur in="SourceGraphic" stdDeviation="5.5" result="b"/>
<feColorMatrix in="b" type="matrix" values="0 0 0 1 0  0 0 0 1 0  0 0 0 1 0  0 0 0 1 0" result="m"/>
<feComponentTransfer in="m">
<feFuncR type="table" tableValues="0.36 0.36 0.38 0.50 0.70 0.98 0.96 0.92 0.84 0.80 0.78"/>
<feFuncG type="table" tableValues="0.56 0.56 0.59 0.70 0.84 0.97 0.75 0.51 0.27 0.20 0.18"/>
<feFuncB type="table" tableValues="0.79 0.79 0.80 0.85 0.90 0.84 0.51 0.31 0.20 0.18 0.16"/>
<feFuncA type="table" tableValues="0 1 1 1 1 1 1 1 1 1 1"/>
</feComponentTransfer></filter></defs>
<g clip-path="url(#hc2)"><g filter="url(#hm2)">
<path d="M2548 1290 Q2560 1276 2600 1276 L2700 1276 Q2740 1290 2745 1330 Q2775 1345 2803 1366 L2803 1500 L2548 1500 Z" fill="#000" fill-opacity="0.26"/>
<circle cx="2611" cy="1286" r="7" fill="#000" fill-opacity="0.32"/>
<circle cx="2580" cy="1320" r="9" fill="#000" fill-opacity="0.12"/>
<circle cx="2700" cy="1330" r="12" fill="#000" fill-opacity="0.08"/>
<circle cx="2600.7" cy="1446.3" r="9.6" fill="#000" fill-opacity="0.1"/>
<circle cx="2640.0" cy="1395.4" r="8.7" fill="#000" fill-opacity="0.1"/>
<circle cx="2578.8" cy="1444.6" r="8.8" fill="#000" fill-opacity="0.1"/>
<circle cx="2636.5" cy="1414.4" r="9.5" fill="#000" fill-opacity="0.1"/>
<circle cx="2636.3" cy="1483.3" r="7.3" fill="#000" fill-opacity="0.1"/>
<circle cx="2629.5" cy="1349.7" r="5.1" fill="#000" fill-opacity="0.1"/>
<circle cx="2571.4" cy="1312.8" r="8.1" fill="#000" fill-opacity="0.1"/>
<circle cx="2684.3" cy="1369.3" r="5.4" fill="#000" fill-opacity="0.1"/>
<circle cx="2699.3" cy="1461.8" r="6.7" fill="#000" fill-opacity="0.1"/>
<circle cx="2656.6" cy="1292.3" r="9.5" fill="#000" fill-opacity="0.1"/>
<circle cx="2560.1" cy="1388.6" r="9.0" fill="#000" fill-opacity="0.1"/>
<circle cx="2584.4" cy="1441.0" r="9.7" fill="#000" fill-opacity="0.1"/>
<circle cx="2708.3" cy="1453.4" r="4.6" fill="#000" fill-opacity="0.1"/>
<circle cx="2659.8" cy="1312.8" r="9.1" fill="#000" fill-opacity="0.1"/>
<circle cx="2625.1" cy="1379.7" r="10.0" fill="#000" fill-opacity="0.1"/>
<circle cx="2664.5" cy="1387.4" r="8.4" fill="#000" fill-opacity="0.1"/>
<ellipse cx="2606" cy="1398" rx="18" ry="12" fill="#000" fill-opacity="0.62"/>
<ellipse cx="2664" cy="1418" rx="52" ry="30" fill="#000" fill-opacity="0.8"/>
<ellipse cx="2695" cy="1398" rx="28" ry="14" fill="#000" fill-opacity="0.62"/>
<ellipse cx="2655" cy="1452" rx="30" ry="10" fill="#000" fill-opacity="0.58"/>
<ellipse cx="2718" cy="1440" rx="12" ry="10" fill="#000" fill-opacity="0.55"/>
</g></g>
<rect x="2551.5" y="1196.5" width="249" height="67.5" fill="#fff" stroke="#222" stroke-width="1.6"/>
<text x="2675" y="1222" text-anchor="middle" font-family="Liberation Sans" font-size="22.5" fill="#111" letter-spacing="0.45">Pitch Frequency</text>
<text x="2555.5" y="1250" font-family="Liberation Sans" font-weight="bold" font-size="15" fill="#111">Least</text>
<text x="2795" y="1250" text-anchor="end" font-family="Liberation Sans" font-weight="bold" font-size="15" fill="#111">Most</text>
<rect x="2555.7" y="1252" width="241.5" height="8" fill="url(#lg2)"/>
<rect x="2621.5" y="1345" width="109" height="109" fill="none" stroke="#000" stroke-width="3.2" rx="1"/>
<g stroke="#000" stroke-width="1.8" stroke-dasharray="3.5,3.5" fill="none"><line x1="2623" y1="1325" x2="2730" y2="1325"/><line x1="2623" y1="1473" x2="2730" y2="1473"/><line x1="2602.5" y1="1344" x2="2602.5" y2="1454"/><line x1="2749.5" y1="1344" x2="2749.5" y2="1454"/></g>
<g transform="translate(2455 1245.0) scale(0.23436)">
<path d="M45 45 L50 78 L330 192 L338 165 Z" fill="#cdcdcd"/>
<path d="M220 120 Q225 60 285 62 Q345 68 345 135 L335 175 L300 215 L235 212 Q215 170 220 120Z" fill="#bcbcbc"/>
<path d="M225 110 Q240 62 290 64 Q345 72 343 140 L320 130 Q280 95 225 110Z" fill="#4a4a4a"/>
<path d="M300 150 Q330 140 345 160 L350 200 L320 210 Z" fill="#555"/>
<path d="M365 175 L415 185 L440 420 L350 428 L330 360 L380 300 Z" fill="#8c8c8c"/>
<path d="M368 275 L430 290 L432 318 L366 305 Z" fill="#ededed"/>
<path d="M100 285 L130 232 L205 220 L312 290 L372 362 L302 425 L242 655 L58 618 L70 540 L62 400 Z" fill="#262626"/>
<path d="M120 240 L330 172 L358 215 L165 325 Z" fill="#2b2b2b"/>
<path d="M150 300 L320 225 L335 245 L180 335 Z" fill="#9a9a9a"/>
<path d="M110 330 L230 360 L200 420 L115 400Z" fill="#3e3e3e"/>
<path d="M58 572 L242 642 L236 668 L52 606 Z" fill="#ececec"/>
<defs><linearGradient id="lgB" x1="0" y1="0" x2="0" y2="1"><stop offset="0" stop-color="#0c0c0c"/><stop offset="0.62" stop-color="#121212"/><stop offset="1" stop-color="#7a7a7a"/></linearGradient></defs><path d="M50 620 L232 658 L292 900 L277 1190 L200 1232 L122 1300 L60 1310 L110 1150 L150 980 L50 760 Z" fill="url(#lgB)" stroke="#bdbdbd" stroke-width="8"/>
<path d="M70 700 L160 740 L190 940 L150 900 Z" fill="#2e2e2e"/>
<path d="M110 1100 L230 1090 L277 1190 L200 1232 L122 1300 L60 1310 Z" fill="#555" opacity="0.6"/>
<path d="M60 1312 L110 1232 L200 1192 L285 1182 L352 1222 L330 1248 L205 1252 L272 1302 L100 1312 Z" fill="#8a8a8a"/>
<path d="M190 1185 L285 1180 L352 1222 L330 1248 L210 1245 Z" fill="#b0b0b0"/>
</g>
</svg>
<!-- left panel -->
<div class="btn" style="left:104px;top:179px;width:190px;height:60px;line-height:57px">New Report</div>
<div class="btn" style="left:319px;top:179px;width:287px;height:60px;line-height:57px">New From Template</div>
<div class="btn" style="left:409px;top:247px;width:197px;height:60px;line-height:57px;color:#2f6d5c">Copy Report</div>
<div class="a" style="left:104px;top:314px;width:427px;height:59px;background:#fff;border:1px solid #dddfe2"></div>
<div class="a" style="left:483px;top:315px;width:1px;height:57px;background:#dddfe2"></div>
<div class="t" style="left:111px;top:332px;font-size:26px;color:#000;letter-spacing:-0.75px">Pitcher Custom Page: pitching -...</div>
<svg class="a" style="left:494px;top:337px" width="23" height="14" viewBox="0 0 23 14"><path d="M2 2 l9.5 9.5 l9.5 -9.5" fill="none" stroke="#666" stroke-width="3.2"/></svg>
<svg class="a" style="left:558px;top:330px" width="33" height="32" viewBox="0 0 33 32"><g fill="#b3b9be"><path d="M0.5 31.5 v-6.5 l19 -19 l6.5 6.5 l-19 19z"/><path d="M22 3.5 l3 -3 l6.5 6.5 l-3 3z"/></g></svg>
<div class="a" style="left:108px;top:390px;width:496px;height:66px;background:#fefbd5"></div>
<div class="t" style="left:339px;top:410.5px;font-size:26px;color:#111;letter-spacing:0.5px">1 -</div>
<div class="btn" style="left:108px;top:474px;width:496px;height:60px;line-height:61px">Add New Page</div>
<div class="btn" style="left:108px;top:552px;width:496px;height:60px;line-height:60px">Add New Page From Template</div>
<div class="a" style="left:1003px;top:186px;width:1296px;height:700px;background:#fff;border-radius:12px;box-shadow:0 4px 20px rgba(0,0,0,0.34)"></div>
<div class="t" style="left:1605px;top:211px;font-size:26px;color:#375a8a;letter-spacing:-0.5px">Settings</div>
<svg class="a" style="left:2251px;top:210px" width="25" height="25" viewBox="0 0 25 25"><path d="M2 2 L23 23 M23 2 L2 23" stroke="#111" stroke-width="3"/></svg>
<div class="a" style="left:1007px;top:252px;width:1288px;height:1.2px;background:#eeeeee"></div>
<div class="a" style="left:1014px;top:334px;width:1274px;height:1.5px;background:#dedede"></div>
<div class="a" style="left:1014px;top:262px;width:204px;height:74px;background:#fff;border:1.5px solid #dedede;border-bottom:none;border-radius:9px 9px 0 0"></div>
<div class="t" style="left:1042px;top:287px;font-size:26px;color:#555;letter-spacing:-1.25px">Page Settings</div>
<div class="t" style="left:1249px;top:287px;font-size:26px;color:#375a8a;letter-spacing:-0.9px">Grid Sizing</div>
<div class="t lbl" style="left:1020.3px;top:353.7px;letter-spacing:-0.52px">Player Description Format</div>
<div class="a" style="left:1021.3px;top:385.3px;width:400px;height:58.5px;border:1.5px solid #dadada;background:#fff"></div>
<div class="a" style="left:1372.8px;top:385.3px;width:1.5px;height:58.5px;background:#dadada"></div>
<svg class="a" style="left:1384.3px;top:407.3px" width="23" height="15" viewBox="0 0 23 15"><path d="M2 2 l9.5 9.5 l9.5 -9.5" fill="none" stroke="#757575" stroke-width="3.2"/></svg>
<div class="t val" style="left:1028.8px;top:402.5px">Medium Headshot</div>
<div class="t lbl" style="left:1450.5px;top:353.7px;letter-spacing:-0.6px">Player Description Alignment</div>
<div class="a" style="left:1451.5px;top:385.3px;width:400px;height:58.5px;border:1.5px solid #dadada;background:#fff"></div>
<div class="a" style="left:1803.0px;top:385.3px;width:1.5px;height:58.5px;background:#dadada"></div>
<svg class="a" style="left:1814.5px;top:407.3px" width="23" height="15" viewBox="0 0 23 15"><path d="M2 2 l9.5 9.5 l9.5 -9.5" fill="none" stroke="#757575" stroke-width="3.2"/></svg>
<div class="t val" style="left:1459.0px;top:402.5px">Left</div>
<div class="t lbl" style="left:1879.5px;top:353.7px;letter-spacing:-0.6px">Player Description Font Size</div>
<div class="a" style="left:1880.5px;top:385.3px;width:400px;height:58.5px;border:1.5px solid #dadada;background:#fff"></div>
<div class="a" style="left:2232.0px;top:385.3px;width:1.5px;height:58.5px;background:#dadada"></div>
<svg class="a" style="left:2243.5px;top:407.3px" width="23" height="15" viewBox="0 0 23 15"><path d="M2 2 l9.5 9.5 l9.5 -9.5" fill="none" stroke="#757575" stroke-width="3.2"/></svg>
<div class="t val" style="left:1888.0px;top:402.5px">20</div>
<div class="t lbl" style="left:1023.5px;top:486.0px;letter-spacing:-0.6px">Page Title</div>
<div class="a" style="left:1021.3px;top:516.4px;width:397.5px;height:58.5px;border:1.5px solid #dadada;background:#fff"></div>
<div class="t" style="left:1037px;top:533.6999999999999px;font-size:26px;color:#3d4650;letter-spacing:-0.4px">Pitcher Report</div>
<div class="t lbl" style="left:1450.5px;top:490.7px;letter-spacing:-0.25px">Title Text Color</div>
<div class="a" style="left:1451.5px;top:521.5px;width:400px;height:58.5px;border:1.5px solid #dadada;background:#fff"></div>
<div class="a" style="left:1803.0px;top:521.5px;width:1.5px;height:58.5px;background:#dadada"></div>
<svg class="a" style="left:1814.5px;top:543.5px" width="23" height="15" viewBox="0 0 23 15"><path d="M2 2 l9.5 9.5 l9.5 -9.5" fill="none" stroke="#757575" stroke-width="3.2"/></svg>
<div class="t val" style="left:1459.0px;top:538.6999999999999px">Black</div>
<div class="t lbl" style="left:1879.5px;top:490.7px;letter-spacing:-0.41px">Title Background Color</div>
<div class="a" style="left:1880.5px;top:521.5px;width:400px;height:58.5px;border:1.5px solid #dadada;background:#fff"></div>
<div class="a" style="left:2232.0px;top:521.5px;width:1.5px;height:58.5px;background:#dadada"></div>
<svg class="a" style="left:2243.5px;top:543.5px" width="23" height="15" viewBox="0 0 23 15"><path d="M2 2 l9.5 9.5 l9.5 -9.5" fill="none" stroke="#757575" stroke-width="3.2"/></svg>
<div class="t val" style="left:1888.0px;top:538.6999999999999px">None</div>
<div class="t lbl" style="left:1020.3px;top:627.6999999999999px;letter-spacing:-0.6px">Title Font Size</div>
<div class="a" style="left:1021.3px;top:658.3px;width:400px;height:58.5px;border:1.5px solid #dadada;background:#fff"></div>
<div class="a" style="left:1372.8px;top:658.3px;width:1.5px;height:58.5px;background:#dadada"></div>
<svg class="a" style="left:1384.3px;top:680.3px" width="23" height="15" viewBox="0 0 23 15"><path d="M2 2 l9.5 9.5 l9.5 -9.5" fill="none" stroke="#757575" stroke-width="3.2"/></svg>
<div class="t val" style="left:1028.8px;top:675.4999999999999px">24</div>
<div class="t lbl" style="left:1450.5px;top:627.6999999999999px;letter-spacing:-0.21px">Title Horizontal Alignment</div>
<div class="a" style="left:1451.5px;top:658.3px;width:400px;height:58.5px;border:1.5px solid #dadada;background:#fff"></div>
<div class="a" style="left:1803.0px;top:658.3px;width:1.5px;height:58.5px;background:#dadada"></div>
<svg class="a" style="left:1814.5px;top:680.3px" width="23" height="15" viewBox="0 0 23 15"><path d="M2 2 l9.5 9.5 l9.5 -9.5" fill="none" stroke="#757575" stroke-width="3.2"/></svg>
<div class="t val" style="left:1459.0px;top:675.4999999999999px">Center</div>
<div class="t lbl" style="left:1879.5px;top:627.6999999999999px;letter-spacing:-0.85px">Player Handedness Color (L)</div>
<div class="a" style="left:1880.5px;top:658.3px;width:400px;height:58.5px;border:1.5px solid #dadada;background:#fff"></div>
<div class="a" style="left:2232.0px;top:658.3px;width:1.5px;height:58.5px;background:#dadada"></div>
<svg class="a" style="left:2243.5px;top:680.3px" width="23" height="15" viewBox="0 0 23 15"><path d="M2 2 l9.5 9.5 l9.5 -9.5" fill="none" stroke="#757575" stroke-width="3.2"/></svg>
<div class="t val" style="left:1888.0px;top:675.4999999999999px">Black</div>
<div class="t lbl" style="left:1020.3px;top:763.0999999999999px;letter-spacing:-0.95px">Player Handedness Color (R)</div>
<div class="a" style="left:1021.3px;top:794.5px;width:400px;height:58.5px;border:1.5px solid #dadada;background:#fff"></div>
<div class="a" style="left:1372.8px;top:794.5px;width:1.5px;height:58.5px;background:#dadada"></div>
<svg class="a" style="left:1384.3px;top:816.5px" width="23" height="15" viewBox="0 0 23 15"><path d="M2 2 l9.5 9.5 l9.5 -9.5" fill="none" stroke="#757575" stroke-width="3.2"/></svg>
<div class="t val" style="left:1028.8px;top:811.6999999999999px">Black</div>
<div class="t lbl" style="left:1450.5px;top:763.0999999999999px;letter-spacing:-0.98px">Player Handedness Color (S)</div>
<div class="a" style="left:1451.5px;top:794.5px;width:400px;height:58.5px;border:1.5px solid #dadada;background:#fff"></div>
<div class="a" style="left:1803.0px;top:794.5px;width:1.5px;height:58.5px;background:#dadada"></div>
<svg class="a" style="left:1814.5px;top:816.5px" width="23" height="15" viewBox="0 0 23 15"><path d="M2 2 l9.5 9.5 l9.5 -9.5" fill="none" stroke="#757575" stroke-width="3.2"/></svg>
<div class="t val" style="left:1459.0px;top:811.6999999999999px">Black</div>
<div class="t lbl" style="left:1879.5px;top:763.0999999999999px;letter-spacing:-0.13px">Print Filters</div>
<div class="a" style="left:1882px;top:816px;width:60px;height:24px;border-radius:12px;background:#90a4c3"></div>
<div class="a" style="left:1911px;top:810px;width:36px;height:36px;border-radius:18px;background:#375a8a;box-shadow:0 1px 3px rgba(0,0,0,0.35)"></div>
<div class="a" style="left:1861.5px;top:328.8px;width:437.5px;height:146.2px;border:11px solid #74f24b;border-radius:46px"></div>
<div class="a" style="left:990px;top:1492px;width:920px;height:120px;border-radius:60px;background:rgba(0,0,0,0.2);filter:blur(34px)"></div>
</div>
</body></html>
